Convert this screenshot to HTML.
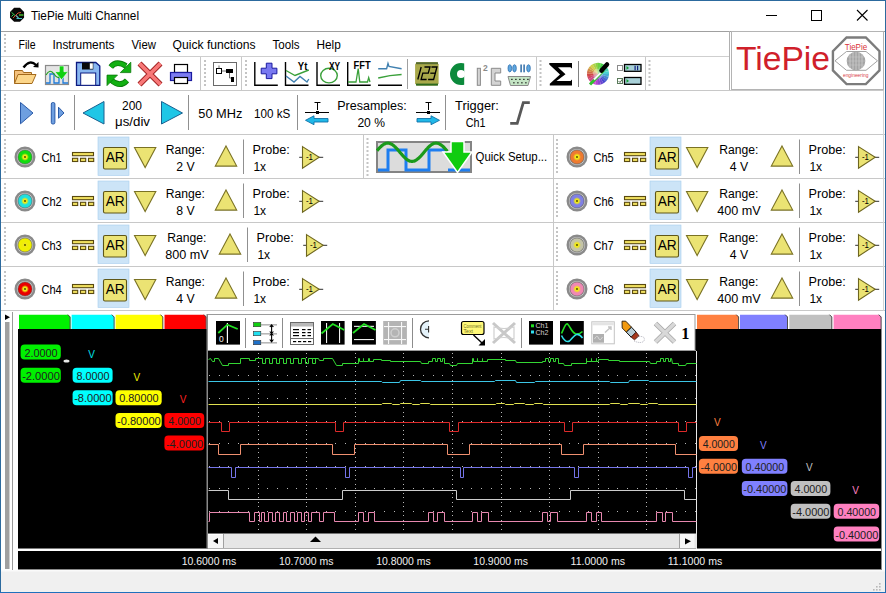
<!DOCTYPE html>
<html><head><meta charset="utf-8"><title>TiePie Multi Channel</title>
<style>html,body{margin:0;padding:0;background:#fff;overflow:hidden}svg{display:block}text{font-family:"Liberation Sans", sans-serif}</style>
</head><body>
<svg width="886" height="593" viewBox="0 0 886 593">
<rect x="0" y="0" width="886" height="593" fill="#ffffff" />
<polygon points="24.07,17.76 19.96,21.87 14.14,21.87 10.03,17.76 10.03,11.94 14.14,7.83 19.96,7.83 24.07,11.94" fill="#080808"/>
<path d="M11.5,12.3 L15,15.5 M11.5,16.5 L13.5,14.5" stroke="#30d050" stroke-width="1" fill="none"/>
<path d="M13,18 L18,13 L21,12.5" stroke="#d05030" stroke-width="1" fill="none"/>
<path d="M16,15.5 L18.5,18" stroke="#70b0c0" stroke-width="1.2" fill="none"/>
<path d="M19,15 H23.5" stroke="#50d030" stroke-width="1.3" fill="none"/>
<path d="M16.5,18.5 H22" stroke="#40c0c8" stroke-width="1" fill="none"/>
<text x="31" y="19.5" font-size="12" fill="#000" text-anchor="start" textLength="108" lengthAdjust="spacingAndGlyphs" >TiePie Multi Channel</text>
<rect x="766" y="15" width="11" height="1" fill="#000"/>
<rect x="811.5" y="10.5" width="10" height="10" fill="none" stroke="#000" stroke-width="1"/>
<path d="M857,10 L867.5,20.5 M867.5,10 L857,20.5" stroke="#000" stroke-width="1.1" fill="none"/>
<rect x="1" y="31" width="884" height="1" fill="#a0a0a0"/>
<rect x="4" y="34" width="2" height="2" fill="#c4c4c4" />
<rect x="4" y="38" width="2" height="2" fill="#c4c4c4" />
<rect x="4" y="42" width="2" height="2" fill="#c4c4c4" />
<rect x="4" y="46" width="2" height="2" fill="#c4c4c4" />
<rect x="4" y="50" width="2" height="2" fill="#c4c4c4" />
<text x="18.5" y="49" font-size="12" fill="#000" text-anchor="start" textLength="17" lengthAdjust="spacingAndGlyphs" >File</text>
<text x="52.5" y="49" font-size="12" fill="#000" text-anchor="start" textLength="62" lengthAdjust="spacingAndGlyphs" >Instruments</text>
<text x="131.5" y="49" font-size="12" fill="#000" text-anchor="start" textLength="24.4" lengthAdjust="spacingAndGlyphs" >View</text>
<text x="172.5" y="49" font-size="12" fill="#000" text-anchor="start" textLength="83" lengthAdjust="spacingAndGlyphs" >Quick functions</text>
<text x="272.5" y="49" font-size="12" fill="#000" text-anchor="start" textLength="27" lengthAdjust="spacingAndGlyphs" >Tools</text>
<text x="316.5" y="49" font-size="12" fill="#000" text-anchor="start" textLength="24.3" lengthAdjust="spacingAndGlyphs" >Help</text>
<rect x="1" y="56" width="729" height="1" fill="#cfcfcf"/>
<rect x="729" y="31" width="1" height="60" fill="#b0b0b0"/>
<rect x="731.5" y="31.5" width="152" height="58" fill="#fff" stroke="#b4b4b4" stroke-width="1"/>
<text x="736" y="69.5" font-size="34" fill="#d0202a" text-anchor="start" textLength="94" lengthAdjust="spacingAndGlyphs" >TiePie</text>
<polygon points="879.48,70.44 865.84,84.08 846.56,84.08 832.92,70.44 832.92,51.16 846.56,37.52 865.84,37.52 879.48,51.16" fill="#fff" stroke="#7c7c7c" stroke-width="2.4"/>
<path d="M835,60.8 L846.5,51.5 L866,51.5 L877.5,60.8 L866,70.3 L846.5,70.3 Z" fill="none" stroke="#8a8a8a" stroke-width="0.8"/>
<circle cx="856" cy="61" r="9.3" fill="#a4a4a4"/>
<path d="M850,54 V68 M853,52.5 V69.5 M856,52 V70 M859,52.5 V69.5 M862,54 V68" stroke="#d8d8d8" stroke-width="0.7"/>
<path d="M848,57 H864 M847,61 H865 M848,65 H864" stroke="#c8c8c8" stroke-width="0.5"/>
<text x="856" y="49.5" font-size="8.5" fill="#d83038" text-anchor="middle" textLength="22.4" lengthAdjust="spacingAndGlyphs" >TiePie</text>
<text x="855.7" y="77.3" font-size="6" fill="#d84048" text-anchor="middle" textLength="25.5" lengthAdjust="spacingAndGlyphs" >engineering</text>
<rect x="1" y="90" width="883" height="1" fill="#c8c8c8"/>
<rect x="4" y="60" width="2" height="2" fill="#c4c4c4" />
<rect x="4" y="64" width="2" height="2" fill="#c4c4c4" />
<rect x="4" y="68" width="2" height="2" fill="#c4c4c4" />
<rect x="4" y="72" width="2" height="2" fill="#c4c4c4" />
<rect x="4" y="76" width="2" height="2" fill="#c4c4c4" />
<rect x="4" y="80" width="2" height="2" fill="#c4c4c4" />
<rect x="4" y="84" width="2" height="2" fill="#c4c4c4" />
<path d="M23.5,67.5 Q30,59 36,65" stroke="#000" stroke-width="2.4" fill="none"/>
<polygon points="38.5,62 38.5,67.5 33,67" fill="#000"/>
<path d="M14.5,83.5 L14.5,70.5 L22.5,70.5 L23.5,72.5 L31.5,72.5 L31.5,75" fill="#f4c27e" stroke="#a46a1c" stroke-width="1"/>
<polygon points="18,74.5 36,74.5 32,83.5 14.5,83.5" fill="#fcd68a" stroke="#a46a1c" stroke-width="1"/>
<rect x="45.5" y="65.5" width="23" height="19" fill="#e4e4e4" stroke="#8a8a8a" stroke-width="1.2"/>
<path d="M46,83 H50 V74 H54 V83 H59 V74 H63 V83 H68" stroke="#1e7ad8" stroke-width="1.3" fill="none"/>
<path d="M46,75 Q50,68 54,74 T62,76 T68,72" stroke="#22a022" stroke-width="1.2" fill="none"/>
<polygon points="59.3,66 63.9,66 63.9,71.7 68,71.7 61.6,79.7 54.8,71.7 59.3,71.7" fill="#10d010" stroke="#fff" stroke-width="0.6"/>
<path d="M76.5,62.5 H95.8 L99.8,66 V85.3 H76.5 Z" fill="#88b6f0" stroke="#0c1a80" stroke-width="1.3"/>
<rect x="82" y="62.5" width="11.3" height="7" fill="#080808"/>
<rect x="89.8" y="63.3" width="3" height="5.5" fill="#fff"/>
<rect x="80.7" y="73" width="15" height="12.3" fill="#fff" stroke="#0c1a80" stroke-width="1"/>
<path d="M110.8,67 Q116,60 126,66" stroke="#0c7a0c" stroke-width="5.6" fill="none"/>
<path d="M110.8,67 Q116,60 126,66" stroke="#12b012" stroke-width="3.8" fill="none"/>
<polygon points="130.8,62.2 130.8,72.6 120.3,72.6" fill="#12b012" stroke="#0c7a0c" stroke-width="0.8"/>
<path d="M127,80.5 Q120,88 111,80" stroke="#0c7a0c" stroke-width="5.6" fill="none"/>
<path d="M127,80.5 Q120,88 111,80" stroke="#12b012" stroke-width="3.8" fill="none"/>
<polygon points="107,75.1 107,85.6 117.5,75.1" fill="#12b012" stroke="#0c7a0c" stroke-width="0.8"/>
<path d="M139.5,63.5 L160.5,84.5 M160.5,63.5 L139.5,84.5" stroke="#a02020" stroke-width="5.6" fill="none"/>
<path d="M139.5,63.5 L160.5,84.5 M160.5,63.5 L139.5,84.5" stroke="#f87878" stroke-width="3.8" fill="none"/>
<rect x="174.5" y="64.5" width="13" height="8" fill="#fff" stroke="#000" stroke-width="1.2"/>
<rect x="170.5" y="72.5" width="21" height="8" fill="#7c7cf0" stroke="#1a1aa0" stroke-width="1.2"/>
<rect x="174.5" y="77.5" width="13" height="6" fill="#fff" stroke="#000" stroke-width="1.2"/>
<rect x="200" y="57" width="1" height="33" fill="#c8c8c8"/>
<rect x="204" y="60" width="2" height="2" fill="#c4c4c4" />
<rect x="204" y="64" width="2" height="2" fill="#c4c4c4" />
<rect x="204" y="68" width="2" height="2" fill="#c4c4c4" />
<rect x="204" y="72" width="2" height="2" fill="#c4c4c4" />
<rect x="204" y="76" width="2" height="2" fill="#c4c4c4" />
<rect x="204" y="80" width="2" height="2" fill="#c4c4c4" />
<rect x="204" y="84" width="2" height="2" fill="#c4c4c4" />
<rect x="213.5" y="62.5" width="23" height="23" fill="#fff" stroke="#6a6a6a" stroke-width="1"/>
<rect x="216.5" y="68.5" width="5" height="5" fill="#fff" stroke="#000" stroke-width="1"/>
<path d="M219,65.5 V68.5 M221.5,71 H226 M229.5,73 V78 H231" stroke="#444" stroke-width="0.8" fill="none"/>
<rect x="226" y="69" width="7" height="4" fill="#000" />
<rect x="231" y="77" width="3" height="5" fill="#000" />
<rect x="241" y="57" width="1" height="33" fill="#c8c8c8"/>
<rect x="245" y="60" width="2" height="2" fill="#c4c4c4" />
<rect x="245" y="64" width="2" height="2" fill="#c4c4c4" />
<rect x="245" y="68" width="2" height="2" fill="#c4c4c4" />
<rect x="245" y="72" width="2" height="2" fill="#c4c4c4" />
<rect x="245" y="76" width="2" height="2" fill="#c4c4c4" />
<rect x="245" y="80" width="2" height="2" fill="#c4c4c4" />
<rect x="245" y="84" width="2" height="2" fill="#c4c4c4" />
<path d="M254.8,62 V85.3 H277.8" stroke="#000" stroke-width="1.4" fill="none"/>
<path d="M266.3,63.2 H272 V68.2 H276.9 V73.8 H272 V78.6 H266.3 V73.8 H261.2 V68.2 H266.3 Z" fill="#7878f0" stroke="#1a1aa0" stroke-width="1"/>
<path d="M285.5,62 V85.3 H308.5" stroke="#000" stroke-width="1.4" fill="none"/>
<path d="M286,70.5 L295,75.5 L308.8,70" stroke="#3aa03a" stroke-width="1.4" fill="none"/>
<path d="M286,76 L294,82 L300,76.5 L307,82 L308.8,79" stroke="#4080b0" stroke-width="1.4" fill="none"/>
<text x="297.8" y="69.5" font-size="10" fill="#000" text-anchor="start" textLength="9.5" lengthAdjust="spacingAndGlyphs" font-weight="bold">Yt</text>
<path d="M317.0,62 V85.3 H340.0" stroke="#000" stroke-width="1.4" fill="none"/>
<ellipse cx="329" cy="75.6" rx="8.3" ry="7.3" fill="none" stroke="#3aa03a" stroke-width="1.4"/>
<text x="328.9" y="69.6" font-size="10" fill="#000" text-anchor="start" textLength="11.2" lengthAdjust="spacingAndGlyphs" font-weight="bold">XY</text>
<path d="M347.7,62 V85.3 H370.7" stroke="#000" stroke-width="1.4" fill="none"/>
<path d="M348,82 H356 L358.2,68.5 L359.8,82 H367.5 L368.7,77.6 L370,82" stroke="#3aa03a" stroke-width="1.3" fill="none"/>
<text x="353.6" y="69" font-size="10" fill="#000" text-anchor="start" textLength="17" lengthAdjust="spacingAndGlyphs" font-weight="bold">FFT</text>
<path d="M378.2,68.8 H386.6 L388,63.5 L389,66.5 L401.6,68.8" stroke="#4080b0" stroke-width="1.4" fill="none"/>
<path d="M378.2,78 Q390,75 401.6,74.5" stroke="#3aa03a" stroke-width="1.4" fill="none"/>
<rect x="378" y="84.5" width="24" height="1.5" fill="#000"/>
<rect x="407" y="59" width="1" height="30" fill="#a0a0a0"/>
<path d="M417,62.2 H436.6 L438.6,64.2 V83.6 L436.6,85.6 H417 L415.1,83.6 V64.2 Z" fill="#a9a94a"/>
<rect x="416" y="62.2" width="22" height="2" fill="#556a30" />
<rect x="416" y="83.6" width="22" height="2" fill="#2e6a1e" />
<path d="M421.17,67.00 L417.80,79.50" stroke="#000" stroke-width="1.3" fill="none"/>
<path d="M424.47,67.00 L429.97,67.00 L428.30,73.20 L422.80,73.20 L421.10,79.50 L426.60,79.50" stroke="#000" stroke-width="1.3" fill="none"/>
<path d="M431.47,67.00 L436.97,67.00 L433.60,79.50 L428.10,79.50" stroke="#000" stroke-width="1.3" fill="none"/>
<path d="M430.30,73.20 L435.30,73.20" stroke="#000" stroke-width="1.3" fill="none"/>
<defs><clipPath id="cclip"><rect x="440" y="60" width="24.2" height="30"/></clipPath></defs>
<ellipse cx="461" cy="74" rx="7.5" ry="7.6" fill="none" stroke="#0c8a3c" stroke-width="7" clip-path="url(#cclip)"/>
<rect x="477.3" y="68.3" width="3.1" height="17" fill="#d4d4d4" stroke="#8a8a8a" stroke-width="1"/>
<text x="483" y="71.3" font-size="8.5" fill="#8a8a8a" text-anchor="start" font-weight="bold">2</text>
<path d="M491.3,68.3 H500.7 V73 H495 V81 H500.7 V85.3 H491.3 Z" fill="#d4d4d4" stroke="#8a8a8a" stroke-width="1"/>
<ellipse cx="509.8" cy="68.3" rx="1.8" ry="3.6" fill="#60a8e0" stroke="#2e70b0" stroke-width="0.8"/>
<ellipse cx="514.5" cy="68.3" rx="1.8" ry="3.6" fill="#60a8e0" stroke="#2e70b0" stroke-width="0.8"/>
<rect x="520.4" y="64.5" width="1.4" height="7.8" fill="#2060a0"/>
<rect x="523.4" y="64.5" width="1.4" height="7.8" fill="#2060a0"/>
<ellipse cx="528.5" cy="68.3" rx="1.8" ry="3.6" fill="#60a8e0" stroke="#2e70b0" stroke-width="0.8"/>
<polygon points="508,76.5 530.5,76.5 528,85.5 510.5,85.5" fill="#c4e4c4" stroke="#8a8a8a" stroke-width="1"/>
<rect x="511.3" y="78.8" width="1.2" height="1.2" fill="#000" />
<rect x="515.3" y="78.8" width="1.2" height="1.2" fill="#000" />
<rect x="519.3" y="78.8" width="1.2" height="1.2" fill="#000" />
<rect x="523.3" y="78.8" width="1.2" height="1.2" fill="#000" />
<rect x="527.3" y="78.8" width="1.2" height="1.2" fill="#000" />
<rect x="513.3" y="82.2" width="1.2" height="1.2" fill="#000" />
<rect x="517.3" y="82.2" width="1.2" height="1.2" fill="#000" />
<rect x="521.3" y="82.2" width="1.2" height="1.2" fill="#000" />
<rect x="525.3" y="82.2" width="1.2" height="1.2" fill="#000" />
<rect x="536" y="57" width="1" height="33" fill="#c8c8c8"/>
<rect x="539.5" y="60" width="2" height="2" fill="#c4c4c4" />
<rect x="539.5" y="64" width="2" height="2" fill="#c4c4c4" />
<rect x="539.5" y="68" width="2" height="2" fill="#c4c4c4" />
<rect x="539.5" y="72" width="2" height="2" fill="#c4c4c4" />
<rect x="539.5" y="76" width="2" height="2" fill="#c4c4c4" />
<rect x="539.5" y="80" width="2" height="2" fill="#c4c4c4" />
<rect x="539.5" y="84" width="2" height="2" fill="#c4c4c4" />
<path d="M549.3,62.9 H572 V68.5 L570.5,67.2 H558 L565.5,74.2 L556.5,81 H570.5 L572,79.5 V85.6 H549.8 V83.8 L560,74.4 L549.3,64.5 Z" fill="#000"/>
<rect x="578" y="61" width="1" height="26" fill="#808080"/>
<path d="M598,73.8 L598.00,62.80 A11,11 0 0 1 600.94,63.20 Z" fill="#69d147"/>
<path d="M598,73.8 L600.85,63.17 A11,11 0 0 1 603.58,64.32 Z" fill="#47d147"/>
<path d="M598,73.8 L603.50,64.27 A11,11 0 0 1 605.85,66.09 Z" fill="#47d169"/>
<path d="M598,73.8 L605.78,66.02 A11,11 0 0 1 607.57,68.38 Z" fill="#47d18c"/>
<path d="M598,73.8 L607.53,68.30 A11,11 0 0 1 608.65,71.05 Z" fill="#47d1ae"/>
<path d="M598,73.8 L608.63,70.95 A11,11 0 0 1 609.00,73.90 Z" fill="#47d1d1"/>
<path d="M598,73.8 L609.00,73.80 A11,11 0 0 1 608.60,76.74 Z" fill="#47aed1"/>
<path d="M598,73.8 L608.63,76.65 A11,11 0 0 1 607.48,79.38 Z" fill="#478cd1"/>
<path d="M598,73.8 L607.53,79.30 A11,11 0 0 1 605.71,81.65 Z" fill="#4769d1"/>
<path d="M598,73.8 L605.78,81.58 A11,11 0 0 1 603.42,83.37 Z" fill="#4747d1"/>
<path d="M598,73.8 L603.50,83.33 A11,11 0 0 1 600.75,84.45 Z" fill="#6947d1"/>
<path d="M598,73.8 L600.85,84.43 A11,11 0 0 1 597.90,84.80 Z" fill="#8c47d1"/>
<path d="M598,73.8 L598.00,84.80 A11,11 0 0 1 595.06,84.40 Z" fill="#ae47d1"/>
<path d="M598,73.8 L595.15,84.43 A11,11 0 0 1 592.42,83.28 Z" fill="#d147d1"/>
<path d="M598,73.8 L592.50,83.33 A11,11 0 0 1 590.15,81.51 Z" fill="#d147ae"/>
<path d="M598,73.8 L590.22,81.58 A11,11 0 0 1 588.43,79.22 Z" fill="#d1478c"/>
<path d="M598,73.8 L588.47,79.30 A11,11 0 0 1 587.35,76.55 Z" fill="#d14769"/>
<path d="M598,73.8 L587.37,76.65 A11,11 0 0 1 587.00,73.70 Z" fill="#d14747"/>
<path d="M598,73.8 L587.00,73.80 A11,11 0 0 1 587.40,70.86 Z" fill="#d16947"/>
<path d="M598,73.8 L587.37,70.95 A11,11 0 0 1 588.52,68.22 Z" fill="#d18c47"/>
<path d="M598,73.8 L588.47,68.30 A11,11 0 0 1 590.29,65.95 Z" fill="#d1ae47"/>
<path d="M598,73.8 L590.22,66.02 A11,11 0 0 1 592.58,64.23 Z" fill="#d1d147"/>
<path d="M598,73.8 L592.50,64.27 A11,11 0 0 1 595.25,63.15 Z" fill="#aed147"/>
<path d="M598,73.8 L595.15,63.17 A11,11 0 0 1 598.10,62.80 Z" fill="#8cd147"/>
<circle cx="598" cy="73.8" r="5" fill="#fff" opacity="0.35"/>
<path d="M590,84.5 L603.5,70.5" stroke="#30c030" stroke-width="3"/>
<path d="M594,79.5 L601,72.5" stroke="#f8f8f8" stroke-width="2"/>
<path d="M601.5,70.5 L607,64.5" stroke="#000" stroke-width="4.5" stroke-linecap="round"/>
<rect x="617.5" y="65.5" width="5" height="5" fill="#fff" stroke="#8a8a8a" stroke-width="1"/>
<rect x="617.5" y="78.5" width="5" height="5" fill="#fff" stroke="#5a7a5a" stroke-width="1"/>
<path d="M618.5,81 L620,82.5 L622.5,79" stroke="#4a6a4a" stroke-width="1" fill="none"/>
<rect x="624.5" y="64.5" width="16.5" height="6.8" fill="#a8d0d8" stroke="#000" stroke-width="1.3"/>
<polygon points="626.5,66.0 629,67.9 626.5,69.8" fill="#10a030"/>
<rect x="624.5" y="77.5" width="16.5" height="6.8" fill="#a8d0d8" stroke="#000" stroke-width="1.3"/>
<polygon points="626.5,79.0 629,80.9 626.5,82.8" fill="#10a030"/>
<rect x="634.5" y="65.8" width="1.2" height="4.5" fill="#102080" />
<rect x="637" y="65.8" width="1.2" height="4.5" fill="#102080" />
<rect x="645" y="57" width="1" height="33" fill="#c8c8c8"/>
<rect x="648.5" y="60" width="2" height="2" fill="#c4c4c4" />
<rect x="648.5" y="64" width="2" height="2" fill="#c4c4c4" />
<rect x="648.5" y="68" width="2" height="2" fill="#c4c4c4" />
<rect x="648.5" y="72" width="2" height="2" fill="#c4c4c4" />
<rect x="648.5" y="76" width="2" height="2" fill="#c4c4c4" />
<rect x="648.5" y="80" width="2" height="2" fill="#c4c4c4" />
<rect x="648.5" y="84" width="2" height="2" fill="#c4c4c4" />
<rect x="1" y="134" width="884" height="1" fill="#c8c8c8"/>
<rect x="4" y="94" width="2" height="2" fill="#c4c4c4" />
<rect x="4" y="98" width="2" height="2" fill="#c4c4c4" />
<rect x="4" y="102" width="2" height="2" fill="#c4c4c4" />
<rect x="4" y="106" width="2" height="2" fill="#c4c4c4" />
<rect x="4" y="110" width="2" height="2" fill="#c4c4c4" />
<rect x="4" y="114" width="2" height="2" fill="#c4c4c4" />
<rect x="4" y="118" width="2" height="2" fill="#c4c4c4" />
<rect x="4" y="122" width="2" height="2" fill="#c4c4c4" />
<rect x="4" y="126" width="2" height="2" fill="#c4c4c4" />
<rect x="4" y="130" width="2" height="2" fill="#c4c4c4" />
<polygon points="20.5,102.5 33,113 20.5,123.8" fill="#6e9fe0" stroke="#2a5aa8" stroke-width="1"/>
<rect x="51.3" y="102.5" width="3.6" height="21.5" rx="1.5" fill="#6e9fe0" stroke="#2a5aa8" stroke-width="1"/>
<polygon points="58.5,107.2 64,113 58.5,118.2" fill="#6e9fe0" stroke="#2a5aa8" stroke-width="1"/>
<rect x="74" y="95" width="1" height="35" fill="#909090"/>
<polygon points="104,101.5 104,124 83,113" fill="#1fc6e6" stroke="#1a6090" stroke-width="1"/>
<text x="132" y="110" font-size="12" fill="#000" text-anchor="middle" textLength="20" lengthAdjust="spacingAndGlyphs" >200</text>
<text x="132.5" y="126" font-size="12" fill="#000" text-anchor="middle" textLength="35" lengthAdjust="spacingAndGlyphs" >μs/div</text>
<polygon points="161.5,101.5 161.5,124 182.5,113" fill="#1fc6e6" stroke="#1a6090" stroke-width="1"/>
<rect x="188" y="95" width="1" height="35" fill="#909090"/>
<text x="198.3" y="118" font-size="12" fill="#000" text-anchor="start" textLength="44" lengthAdjust="spacingAndGlyphs" >50 MHz</text>
<text x="254" y="118" font-size="12" fill="#000" text-anchor="start" textLength="36.3" lengthAdjust="spacingAndGlyphs" >100 kS</text>
<rect x="297" y="95" width="1" height="35" fill="#909090"/>
<path d="M314.5,102.5 H320.5 M317.5,102.5 V110" stroke="#000" stroke-width="1" fill="none"/>
<rect x="305" y="112" width="24" height="1" fill="#000"/>
<rect x="316" y="111" width="3" height="3" fill="#000" />
<polygon points="328,118.5 314,118.5 314,115.8 305.5,120.3 314,124.7 314,122 328,122" fill="#20b8e8" stroke="#1070a8" stroke-width="0.9"/>
<text x="372" y="110" font-size="12" fill="#000" text-anchor="middle" textLength="69.5" lengthAdjust="spacingAndGlyphs" >Presamples:</text>
<text x="371.2" y="126.5" font-size="12" fill="#000" text-anchor="middle" textLength="27.6" lengthAdjust="spacingAndGlyphs" >20 %</text>
<path d="M425.5,102.5 H431.5 M428.5,102.5 V110" stroke="#000" stroke-width="1" fill="none"/>
<rect x="416" y="112" width="24" height="1" fill="#000"/>
<rect x="427" y="111" width="3" height="3" fill="#000" />
<polygon points="417,118.5 431,118.5 431,115.8 439.5,120.3 431,124.7 431,122 417,122" fill="#20b8e8" stroke="#1070a8" stroke-width="0.9"/>
<rect x="445" y="95" width="1" height="35" fill="#909090"/>
<text x="477" y="110" font-size="12" fill="#000" text-anchor="middle" textLength="43.8" lengthAdjust="spacingAndGlyphs" >Trigger:</text>
<text x="475.7" y="126.5" font-size="12" fill="#000" text-anchor="middle" textLength="19.8" lengthAdjust="spacingAndGlyphs" >Ch1</text>
<path d="M510.2,123.3 H517.2 L523.3,102.6 H529.8" stroke="#585858" stroke-width="2.8" fill="none" stroke-linejoin="miter"/>
<rect x="1" y="178" width="884" height="1" fill="#c8c8c8"/>
<rect x="1" y="222" width="884" height="1" fill="#c8c8c8"/>
<rect x="1" y="266" width="884" height="1" fill="#c8c8c8"/>
<rect x="1" y="310" width="884" height="1" fill="#c8c8c8"/>
<rect x="4" y="139" width="2" height="2" fill="#c4c4c4" />
<rect x="4" y="143" width="2" height="2" fill="#c4c4c4" />
<rect x="4" y="147" width="2" height="2" fill="#c4c4c4" />
<rect x="4" y="151" width="2" height="2" fill="#c4c4c4" />
<rect x="4" y="155" width="2" height="2" fill="#c4c4c4" />
<rect x="4" y="159" width="2" height="2" fill="#c4c4c4" />
<rect x="4" y="163" width="2" height="2" fill="#c4c4c4" />
<rect x="4" y="167" width="2" height="2" fill="#c4c4c4" />
<rect x="4" y="171" width="2" height="2" fill="#c4c4c4" />
<defs><radialGradient id="ledg1" cx="0.5" cy="0.5" r="0.5"><stop offset="0" stop-color="#f4ec10"/><stop offset="0.28" stop-color="#f0e818"/><stop offset="0.55" stop-color="#10dc10"/><stop offset="1" stop-color="#10dc10"/></radialGradient></defs>
<circle cx="25" cy="157" r="9.3" fill="#d4d4d4" stroke="#8a8a8a" stroke-width="2.4"/>
<circle cx="25" cy="157" r="7.1" fill="url(#ledg1)" stroke="#505050" stroke-width="1" stroke-opacity="0.6"/>
<circle cx="25" cy="157" r="0.9" fill="#404000"/>
<text x="41.4" y="161.6" font-size="12" fill="#000" text-anchor="start" textLength="20.3" lengthAdjust="spacingAndGlyphs" >Ch1</text>
<rect x="72.5" y="152.5" width="21" height="3.2" fill="#f0e060" stroke="#5a4a10" stroke-width="1.1"/>
<rect x="72.5" y="158.3" width="5.2" height="3.2" fill="#f0e060" stroke="#5a4a10" stroke-width="1.1"/>
<rect x="80.5" y="158.3" width="5.2" height="3.2" fill="#f0e060" stroke="#5a4a10" stroke-width="1.1"/>
<rect x="88.5" y="158.3" width="5.2" height="3.2" fill="#f0e060" stroke="#5a4a10" stroke-width="1.1"/>
<rect x="98" y="137" width="31" height="38.5" fill="#cce4f7" stroke="#a6cdee" stroke-width="0.6"/>
<rect x="103.5" y="147.5" width="23" height="21.5" rx="1.5" fill="#ece476" stroke="#5e5618" stroke-width="1.1"/>
<text x="115.2" y="161.9" font-size="14" fill="#000" text-anchor="middle" textLength="19" lengthAdjust="spacingAndGlyphs" >AR</text>
<polygon points="134.5,147.5 155.8,147.5 145.15,167.5" fill="#ebe373" stroke="#7a7224" stroke-width="1.1"/>
<text x="185.4" y="153.7" font-size="12" fill="#000" text-anchor="middle" textLength="39.2" lengthAdjust="spacingAndGlyphs" >Range:</text>
<text x="185.4" y="170.8" font-size="12" fill="#000" text-anchor="middle" textLength="18.4" lengthAdjust="spacingAndGlyphs" >2 V</text>
<polygon points="226.0,146.0 236.7,166.1 215.3,166.1" fill="#ebe373" stroke="#7a7224" stroke-width="1.1"/>
<rect x="243" y="139.5" width="1" height="34.5" fill="#909090"/>
<text x="252.6" y="153.7" font-size="12" fill="#000" text-anchor="start" textLength="37.2" lengthAdjust="spacingAndGlyphs" >Probe:</text>
<text x="253.4" y="170.8" font-size="12" fill="#000" text-anchor="start" >1x</text>
<rect x="299.2" y="156.8" width="24.0" height="1" fill="#303030"/>
<polygon points="302.5,146.60000000000002 319.2,157.3 302.5,168.20000000000002" fill="#ebe373" stroke="#6e6620" stroke-width="1.1"/>
<text x="309.4" y="160.3" font-size="8.5" fill="#000" text-anchor="middle" textLength="7" lengthAdjust="spacingAndGlyphs" >-1</text>
<rect x="4" y="183" width="2" height="2" fill="#c4c4c4" />
<rect x="4" y="187" width="2" height="2" fill="#c4c4c4" />
<rect x="4" y="191" width="2" height="2" fill="#c4c4c4" />
<rect x="4" y="195" width="2" height="2" fill="#c4c4c4" />
<rect x="4" y="199" width="2" height="2" fill="#c4c4c4" />
<rect x="4" y="203" width="2" height="2" fill="#c4c4c4" />
<rect x="4" y="207" width="2" height="2" fill="#c4c4c4" />
<rect x="4" y="211" width="2" height="2" fill="#c4c4c4" />
<rect x="4" y="215" width="2" height="2" fill="#c4c4c4" />
<defs><radialGradient id="ledg2" cx="0.5" cy="0.5" r="0.5"><stop offset="0" stop-color="#f4ec10"/><stop offset="0.28" stop-color="#f0e818"/><stop offset="0.55" stop-color="#20e0e0"/><stop offset="1" stop-color="#20e0e0"/></radialGradient></defs>
<circle cx="25" cy="201" r="9.3" fill="#d4d4d4" stroke="#8a8a8a" stroke-width="2.4"/>
<circle cx="25" cy="201" r="7.1" fill="url(#ledg2)" stroke="#505050" stroke-width="1" stroke-opacity="0.6"/>
<circle cx="25" cy="201" r="0.9" fill="#404000"/>
<text x="41.4" y="205.6" font-size="12" fill="#000" text-anchor="start" textLength="20.3" lengthAdjust="spacingAndGlyphs" >Ch2</text>
<rect x="72.5" y="196.5" width="21" height="3.2" fill="#f0e060" stroke="#5a4a10" stroke-width="1.1"/>
<rect x="72.5" y="202.3" width="5.2" height="3.2" fill="#f0e060" stroke="#5a4a10" stroke-width="1.1"/>
<rect x="80.5" y="202.3" width="5.2" height="3.2" fill="#f0e060" stroke="#5a4a10" stroke-width="1.1"/>
<rect x="88.5" y="202.3" width="5.2" height="3.2" fill="#f0e060" stroke="#5a4a10" stroke-width="1.1"/>
<rect x="98" y="181" width="31" height="38.5" fill="#cce4f7" stroke="#a6cdee" stroke-width="0.6"/>
<rect x="103.5" y="191.5" width="23" height="21.5" rx="1.5" fill="#ece476" stroke="#5e5618" stroke-width="1.1"/>
<text x="115.2" y="205.9" font-size="14" fill="#000" text-anchor="middle" textLength="19" lengthAdjust="spacingAndGlyphs" >AR</text>
<polygon points="134.5,191.5 155.8,191.5 145.15,211.5" fill="#ebe373" stroke="#7a7224" stroke-width="1.1"/>
<text x="185.4" y="197.7" font-size="12" fill="#000" text-anchor="middle" textLength="39.2" lengthAdjust="spacingAndGlyphs" >Range:</text>
<text x="185.4" y="214.8" font-size="12" fill="#000" text-anchor="middle" textLength="18.4" lengthAdjust="spacingAndGlyphs" >8 V</text>
<polygon points="226.0,190.0 236.7,210.1 215.3,210.1" fill="#ebe373" stroke="#7a7224" stroke-width="1.1"/>
<rect x="243" y="183.5" width="1" height="34.5" fill="#909090"/>
<text x="252.6" y="197.7" font-size="12" fill="#000" text-anchor="start" textLength="37.2" lengthAdjust="spacingAndGlyphs" >Probe:</text>
<text x="253.4" y="214.8" font-size="12" fill="#000" text-anchor="start" >1x</text>
<rect x="299.2" y="200.8" width="24.0" height="1" fill="#303030"/>
<polygon points="302.5,190.60000000000002 319.2,201.3 302.5,212.20000000000002" fill="#ebe373" stroke="#6e6620" stroke-width="1.1"/>
<text x="309.4" y="204.3" font-size="8.5" fill="#000" text-anchor="middle" textLength="7" lengthAdjust="spacingAndGlyphs" >-1</text>
<rect x="4" y="227" width="2" height="2" fill="#c4c4c4" />
<rect x="4" y="231" width="2" height="2" fill="#c4c4c4" />
<rect x="4" y="235" width="2" height="2" fill="#c4c4c4" />
<rect x="4" y="239" width="2" height="2" fill="#c4c4c4" />
<rect x="4" y="243" width="2" height="2" fill="#c4c4c4" />
<rect x="4" y="247" width="2" height="2" fill="#c4c4c4" />
<rect x="4" y="251" width="2" height="2" fill="#c4c4c4" />
<rect x="4" y="255" width="2" height="2" fill="#c4c4c4" />
<rect x="4" y="259" width="2" height="2" fill="#c4c4c4" />
<defs><radialGradient id="ledg3" cx="0.5" cy="0.5" r="0.5"><stop offset="0" stop-color="#f4ec10"/><stop offset="0.28" stop-color="#f0e818"/><stop offset="0.55" stop-color="#f0f000"/><stop offset="1" stop-color="#f0f000"/></radialGradient></defs>
<circle cx="25" cy="245" r="9.3" fill="#d4d4d4" stroke="#8a8a8a" stroke-width="2.4"/>
<circle cx="25" cy="245" r="7.1" fill="url(#ledg3)" stroke="#505050" stroke-width="1" stroke-opacity="0.6"/>
<circle cx="25" cy="245" r="0.9" fill="#404000"/>
<text x="41.4" y="249.6" font-size="12" fill="#000" text-anchor="start" textLength="20.3" lengthAdjust="spacingAndGlyphs" >Ch3</text>
<rect x="72.5" y="240.5" width="21" height="3.2" fill="#f0e060" stroke="#5a4a10" stroke-width="1.1"/>
<rect x="72.5" y="246.3" width="5.2" height="3.2" fill="#f0e060" stroke="#5a4a10" stroke-width="1.1"/>
<rect x="80.5" y="246.3" width="5.2" height="3.2" fill="#f0e060" stroke="#5a4a10" stroke-width="1.1"/>
<rect x="88.5" y="246.3" width="5.2" height="3.2" fill="#f0e060" stroke="#5a4a10" stroke-width="1.1"/>
<rect x="98" y="225" width="31" height="38.5" fill="#cce4f7" stroke="#a6cdee" stroke-width="0.6"/>
<rect x="103.5" y="235.5" width="23" height="21.5" rx="1.5" fill="#ece476" stroke="#5e5618" stroke-width="1.1"/>
<text x="115.2" y="249.9" font-size="14" fill="#000" text-anchor="middle" textLength="19" lengthAdjust="spacingAndGlyphs" >AR</text>
<polygon points="134.5,235.5 155.8,235.5 145.15,255.5" fill="#ebe373" stroke="#7a7224" stroke-width="1.1"/>
<text x="186.9" y="241.7" font-size="12" fill="#000" text-anchor="middle" textLength="39.2" lengthAdjust="spacingAndGlyphs" >Range:</text>
<text x="186.9" y="258.8" font-size="12" fill="#000" text-anchor="middle" textLength="43.5" lengthAdjust="spacingAndGlyphs" >800 mV</text>
<polygon points="230.0,234.0 240.7,254.1 219.3,254.1" fill="#ebe373" stroke="#7a7224" stroke-width="1.1"/>
<rect x="247" y="227.5" width="1" height="34.5" fill="#909090"/>
<text x="256.6" y="241.7" font-size="12" fill="#000" text-anchor="start" textLength="37.2" lengthAdjust="spacingAndGlyphs" >Probe:</text>
<text x="257.4" y="258.8" font-size="12" fill="#000" text-anchor="start" >1x</text>
<rect x="303.2" y="244.8" width="24.0" height="1" fill="#303030"/>
<polygon points="306.5,234.60000000000002 323.2,245.3 306.5,256.2" fill="#ebe373" stroke="#6e6620" stroke-width="1.1"/>
<text x="313.4" y="248.3" font-size="8.5" fill="#000" text-anchor="middle" textLength="7" lengthAdjust="spacingAndGlyphs" >-1</text>
<rect x="4" y="271" width="2" height="2" fill="#c4c4c4" />
<rect x="4" y="275" width="2" height="2" fill="#c4c4c4" />
<rect x="4" y="279" width="2" height="2" fill="#c4c4c4" />
<rect x="4" y="283" width="2" height="2" fill="#c4c4c4" />
<rect x="4" y="287" width="2" height="2" fill="#c4c4c4" />
<rect x="4" y="291" width="2" height="2" fill="#c4c4c4" />
<rect x="4" y="295" width="2" height="2" fill="#c4c4c4" />
<rect x="4" y="299" width="2" height="2" fill="#c4c4c4" />
<rect x="4" y="303" width="2" height="2" fill="#c4c4c4" />
<defs><radialGradient id="ledg4" cx="0.5" cy="0.5" r="0.5"><stop offset="0" stop-color="#f4ec10"/><stop offset="0.28" stop-color="#f0e818"/><stop offset="0.55" stop-color="#e80000"/><stop offset="1" stop-color="#e80000"/></radialGradient></defs>
<circle cx="25" cy="289" r="9.3" fill="#d4d4d4" stroke="#8a8a8a" stroke-width="2.4"/>
<circle cx="25" cy="289" r="7.1" fill="url(#ledg4)" stroke="#505050" stroke-width="1" stroke-opacity="0.6"/>
<circle cx="25" cy="289" r="0.9" fill="#404000"/>
<text x="41.4" y="293.6" font-size="12" fill="#000" text-anchor="start" textLength="20.3" lengthAdjust="spacingAndGlyphs" >Ch4</text>
<rect x="72.5" y="284.5" width="21" height="3.2" fill="#f0e060" stroke="#5a4a10" stroke-width="1.1"/>
<rect x="72.5" y="290.3" width="5.2" height="3.2" fill="#f0e060" stroke="#5a4a10" stroke-width="1.1"/>
<rect x="80.5" y="290.3" width="5.2" height="3.2" fill="#f0e060" stroke="#5a4a10" stroke-width="1.1"/>
<rect x="88.5" y="290.3" width="5.2" height="3.2" fill="#f0e060" stroke="#5a4a10" stroke-width="1.1"/>
<rect x="98" y="269" width="31" height="38.5" fill="#cce4f7" stroke="#a6cdee" stroke-width="0.6"/>
<rect x="103.5" y="279.5" width="23" height="21.5" rx="1.5" fill="#ece476" stroke="#5e5618" stroke-width="1.1"/>
<text x="115.2" y="293.9" font-size="14" fill="#000" text-anchor="middle" textLength="19" lengthAdjust="spacingAndGlyphs" >AR</text>
<polygon points="134.5,279.5 155.8,279.5 145.15,299.5" fill="#ebe373" stroke="#7a7224" stroke-width="1.1"/>
<text x="185.4" y="285.7" font-size="12" fill="#000" text-anchor="middle" textLength="39.2" lengthAdjust="spacingAndGlyphs" >Range:</text>
<text x="185.4" y="302.8" font-size="12" fill="#000" text-anchor="middle" textLength="18.4" lengthAdjust="spacingAndGlyphs" >4 V</text>
<polygon points="226.0,278.0 236.7,298.1 215.3,298.1" fill="#ebe373" stroke="#7a7224" stroke-width="1.1"/>
<rect x="243" y="271.5" width="1" height="34.5" fill="#909090"/>
<text x="252.6" y="285.7" font-size="12" fill="#000" text-anchor="start" textLength="37.2" lengthAdjust="spacingAndGlyphs" >Probe:</text>
<text x="253.4" y="302.8" font-size="12" fill="#000" text-anchor="start" >1x</text>
<rect x="299.2" y="288.8" width="24.0" height="1" fill="#303030"/>
<polygon points="302.5,278.6 319.2,289.3 302.5,300.2" fill="#ebe373" stroke="#6e6620" stroke-width="1.1"/>
<text x="309.4" y="292.3" font-size="8.5" fill="#000" text-anchor="middle" textLength="7" lengthAdjust="spacingAndGlyphs" >-1</text>
<rect x="556" y="139" width="2" height="2" fill="#c4c4c4" />
<rect x="556" y="143" width="2" height="2" fill="#c4c4c4" />
<rect x="556" y="147" width="2" height="2" fill="#c4c4c4" />
<rect x="556" y="151" width="2" height="2" fill="#c4c4c4" />
<rect x="556" y="155" width="2" height="2" fill="#c4c4c4" />
<rect x="556" y="159" width="2" height="2" fill="#c4c4c4" />
<rect x="556" y="163" width="2" height="2" fill="#c4c4c4" />
<rect x="556" y="167" width="2" height="2" fill="#c4c4c4" />
<rect x="556" y="171" width="2" height="2" fill="#c4c4c4" />
<defs><radialGradient id="ledg5" cx="0.5" cy="0.5" r="0.5"><stop offset="0" stop-color="#f4ec10"/><stop offset="0.28" stop-color="#f0e818"/><stop offset="0.55" stop-color="#ee7a30"/><stop offset="1" stop-color="#ee7a30"/></radialGradient></defs>
<circle cx="577" cy="157" r="9.3" fill="#d4d4d4" stroke="#8a8a8a" stroke-width="2.4"/>
<circle cx="577" cy="157" r="7.1" fill="url(#ledg5)" stroke="#505050" stroke-width="1" stroke-opacity="0.6"/>
<circle cx="577" cy="157" r="0.9" fill="#404000"/>
<text x="593.4" y="161.6" font-size="12" fill="#000" text-anchor="start" textLength="20.3" lengthAdjust="spacingAndGlyphs" >Ch5</text>
<rect x="624.5" y="152.5" width="21" height="3.2" fill="#f0e060" stroke="#5a4a10" stroke-width="1.1"/>
<rect x="624.5" y="158.3" width="5.2" height="3.2" fill="#f0e060" stroke="#5a4a10" stroke-width="1.1"/>
<rect x="632.5" y="158.3" width="5.2" height="3.2" fill="#f0e060" stroke="#5a4a10" stroke-width="1.1"/>
<rect x="640.5" y="158.3" width="5.2" height="3.2" fill="#f0e060" stroke="#5a4a10" stroke-width="1.1"/>
<rect x="650" y="137" width="31" height="38.5" fill="#cce4f7" stroke="#a6cdee" stroke-width="0.6"/>
<rect x="655.5" y="147.5" width="23" height="21.5" rx="1.5" fill="#ece476" stroke="#5e5618" stroke-width="1.1"/>
<text x="667.2" y="161.9" font-size="14" fill="#000" text-anchor="middle" textLength="19" lengthAdjust="spacingAndGlyphs" >AR</text>
<polygon points="686.5,147.5 707.8,147.5 697.15,167.5" fill="#ebe373" stroke="#7a7224" stroke-width="1.1"/>
<text x="738.9" y="153.7" font-size="12" fill="#000" text-anchor="middle" textLength="39.2" lengthAdjust="spacingAndGlyphs" >Range:</text>
<text x="738.9" y="170.8" font-size="12" fill="#000" text-anchor="middle" textLength="18.4" lengthAdjust="spacingAndGlyphs" >4 V</text>
<polygon points="782.0,146.0 792.7,166.1 771.3,166.1" fill="#ebe373" stroke="#7a7224" stroke-width="1.1"/>
<rect x="799" y="139.5" width="1" height="34.5" fill="#909090"/>
<text x="808.6" y="153.7" font-size="12" fill="#000" text-anchor="start" textLength="37.2" lengthAdjust="spacingAndGlyphs" >Probe:</text>
<text x="809.4" y="170.8" font-size="12" fill="#000" text-anchor="start" >1x</text>
<rect x="855.2" y="156.8" width="24.0" height="1" fill="#303030"/>
<polygon points="858.5,146.60000000000002 875.2,157.3 858.5,168.20000000000002" fill="#ebe373" stroke="#6e6620" stroke-width="1.1"/>
<text x="865.4000000000001" y="160.3" font-size="8.5" fill="#000" text-anchor="middle" textLength="7" lengthAdjust="spacingAndGlyphs" >-1</text>
<rect x="556" y="183" width="2" height="2" fill="#c4c4c4" />
<rect x="556" y="187" width="2" height="2" fill="#c4c4c4" />
<rect x="556" y="191" width="2" height="2" fill="#c4c4c4" />
<rect x="556" y="195" width="2" height="2" fill="#c4c4c4" />
<rect x="556" y="199" width="2" height="2" fill="#c4c4c4" />
<rect x="556" y="203" width="2" height="2" fill="#c4c4c4" />
<rect x="556" y="207" width="2" height="2" fill="#c4c4c4" />
<rect x="556" y="211" width="2" height="2" fill="#c4c4c4" />
<rect x="556" y="215" width="2" height="2" fill="#c4c4c4" />
<defs><radialGradient id="ledg6" cx="0.5" cy="0.5" r="0.5"><stop offset="0" stop-color="#f4ec10"/><stop offset="0.28" stop-color="#f0e818"/><stop offset="0.55" stop-color="#8080e4"/><stop offset="1" stop-color="#8080e4"/></radialGradient></defs>
<circle cx="577" cy="201" r="9.3" fill="#d4d4d4" stroke="#8a8a8a" stroke-width="2.4"/>
<circle cx="577" cy="201" r="7.1" fill="url(#ledg6)" stroke="#505050" stroke-width="1" stroke-opacity="0.6"/>
<circle cx="577" cy="201" r="0.9" fill="#404000"/>
<text x="593.4" y="205.6" font-size="12" fill="#000" text-anchor="start" textLength="20.3" lengthAdjust="spacingAndGlyphs" >Ch6</text>
<rect x="624.5" y="196.5" width="21" height="3.2" fill="#f0e060" stroke="#5a4a10" stroke-width="1.1"/>
<rect x="624.5" y="202.3" width="5.2" height="3.2" fill="#f0e060" stroke="#5a4a10" stroke-width="1.1"/>
<rect x="632.5" y="202.3" width="5.2" height="3.2" fill="#f0e060" stroke="#5a4a10" stroke-width="1.1"/>
<rect x="640.5" y="202.3" width="5.2" height="3.2" fill="#f0e060" stroke="#5a4a10" stroke-width="1.1"/>
<rect x="650" y="181" width="31" height="38.5" fill="#cce4f7" stroke="#a6cdee" stroke-width="0.6"/>
<rect x="655.5" y="191.5" width="23" height="21.5" rx="1.5" fill="#ece476" stroke="#5e5618" stroke-width="1.1"/>
<text x="667.2" y="205.9" font-size="14" fill="#000" text-anchor="middle" textLength="19" lengthAdjust="spacingAndGlyphs" >AR</text>
<polygon points="686.5,191.5 707.8,191.5 697.15,211.5" fill="#ebe373" stroke="#7a7224" stroke-width="1.1"/>
<text x="738.9" y="197.7" font-size="12" fill="#000" text-anchor="middle" textLength="39.2" lengthAdjust="spacingAndGlyphs" >Range:</text>
<text x="738.9" y="214.8" font-size="12" fill="#000" text-anchor="middle" textLength="43.5" lengthAdjust="spacingAndGlyphs" >400 mV</text>
<polygon points="782.0,190.0 792.7,210.1 771.3,210.1" fill="#ebe373" stroke="#7a7224" stroke-width="1.1"/>
<rect x="799" y="183.5" width="1" height="34.5" fill="#909090"/>
<text x="808.6" y="197.7" font-size="12" fill="#000" text-anchor="start" textLength="37.2" lengthAdjust="spacingAndGlyphs" >Probe:</text>
<text x="809.4" y="214.8" font-size="12" fill="#000" text-anchor="start" >1x</text>
<rect x="855.2" y="200.8" width="24.0" height="1" fill="#303030"/>
<polygon points="858.5,190.60000000000002 875.2,201.3 858.5,212.20000000000002" fill="#ebe373" stroke="#6e6620" stroke-width="1.1"/>
<text x="865.4000000000001" y="204.3" font-size="8.5" fill="#000" text-anchor="middle" textLength="7" lengthAdjust="spacingAndGlyphs" >-1</text>
<rect x="556" y="227" width="2" height="2" fill="#c4c4c4" />
<rect x="556" y="231" width="2" height="2" fill="#c4c4c4" />
<rect x="556" y="235" width="2" height="2" fill="#c4c4c4" />
<rect x="556" y="239" width="2" height="2" fill="#c4c4c4" />
<rect x="556" y="243" width="2" height="2" fill="#c4c4c4" />
<rect x="556" y="247" width="2" height="2" fill="#c4c4c4" />
<rect x="556" y="251" width="2" height="2" fill="#c4c4c4" />
<rect x="556" y="255" width="2" height="2" fill="#c4c4c4" />
<rect x="556" y="259" width="2" height="2" fill="#c4c4c4" />
<defs><radialGradient id="ledg7" cx="0.5" cy="0.5" r="0.5"><stop offset="0" stop-color="#f4ec10"/><stop offset="0.28" stop-color="#f0e818"/><stop offset="0.55" stop-color="#c4c4a8"/><stop offset="1" stop-color="#c4c4a8"/></radialGradient></defs>
<circle cx="577" cy="245" r="9.3" fill="#d4d4d4" stroke="#8a8a8a" stroke-width="2.4"/>
<circle cx="577" cy="245" r="7.1" fill="url(#ledg7)" stroke="#505050" stroke-width="1" stroke-opacity="0.6"/>
<circle cx="577" cy="245" r="0.9" fill="#404000"/>
<text x="593.4" y="249.6" font-size="12" fill="#000" text-anchor="start" textLength="20.3" lengthAdjust="spacingAndGlyphs" >Ch7</text>
<rect x="624.5" y="240.5" width="21" height="3.2" fill="#f0e060" stroke="#5a4a10" stroke-width="1.1"/>
<rect x="624.5" y="246.3" width="5.2" height="3.2" fill="#f0e060" stroke="#5a4a10" stroke-width="1.1"/>
<rect x="632.5" y="246.3" width="5.2" height="3.2" fill="#f0e060" stroke="#5a4a10" stroke-width="1.1"/>
<rect x="640.5" y="246.3" width="5.2" height="3.2" fill="#f0e060" stroke="#5a4a10" stroke-width="1.1"/>
<rect x="650" y="225" width="31" height="38.5" fill="#cce4f7" stroke="#a6cdee" stroke-width="0.6"/>
<rect x="655.5" y="235.5" width="23" height="21.5" rx="1.5" fill="#ece476" stroke="#5e5618" stroke-width="1.1"/>
<text x="667.2" y="249.9" font-size="14" fill="#000" text-anchor="middle" textLength="19" lengthAdjust="spacingAndGlyphs" >AR</text>
<polygon points="686.5,235.5 707.8,235.5 697.15,255.5" fill="#ebe373" stroke="#7a7224" stroke-width="1.1"/>
<text x="738.9" y="241.7" font-size="12" fill="#000" text-anchor="middle" textLength="39.2" lengthAdjust="spacingAndGlyphs" >Range:</text>
<text x="738.9" y="258.8" font-size="12" fill="#000" text-anchor="middle" textLength="18.4" lengthAdjust="spacingAndGlyphs" >4 V</text>
<polygon points="782.0,234.0 792.7,254.1 771.3,254.1" fill="#ebe373" stroke="#7a7224" stroke-width="1.1"/>
<rect x="799" y="227.5" width="1" height="34.5" fill="#909090"/>
<text x="808.6" y="241.7" font-size="12" fill="#000" text-anchor="start" textLength="37.2" lengthAdjust="spacingAndGlyphs" >Probe:</text>
<text x="809.4" y="258.8" font-size="12" fill="#000" text-anchor="start" >1x</text>
<rect x="855.2" y="244.8" width="24.0" height="1" fill="#303030"/>
<polygon points="858.5,234.60000000000002 875.2,245.3 858.5,256.2" fill="#ebe373" stroke="#6e6620" stroke-width="1.1"/>
<text x="865.4000000000001" y="248.3" font-size="8.5" fill="#000" text-anchor="middle" textLength="7" lengthAdjust="spacingAndGlyphs" >-1</text>
<rect x="556" y="271" width="2" height="2" fill="#c4c4c4" />
<rect x="556" y="275" width="2" height="2" fill="#c4c4c4" />
<rect x="556" y="279" width="2" height="2" fill="#c4c4c4" />
<rect x="556" y="283" width="2" height="2" fill="#c4c4c4" />
<rect x="556" y="287" width="2" height="2" fill="#c4c4c4" />
<rect x="556" y="291" width="2" height="2" fill="#c4c4c4" />
<rect x="556" y="295" width="2" height="2" fill="#c4c4c4" />
<rect x="556" y="299" width="2" height="2" fill="#c4c4c4" />
<rect x="556" y="303" width="2" height="2" fill="#c4c4c4" />
<defs><radialGradient id="ledg8" cx="0.5" cy="0.5" r="0.5"><stop offset="0" stop-color="#f4ec10"/><stop offset="0.28" stop-color="#f0e818"/><stop offset="0.55" stop-color="#f088b4"/><stop offset="1" stop-color="#f088b4"/></radialGradient></defs>
<circle cx="577" cy="289" r="9.3" fill="#d4d4d4" stroke="#8a8a8a" stroke-width="2.4"/>
<circle cx="577" cy="289" r="7.1" fill="url(#ledg8)" stroke="#505050" stroke-width="1" stroke-opacity="0.6"/>
<circle cx="577" cy="289" r="0.9" fill="#404000"/>
<text x="593.4" y="293.6" font-size="12" fill="#000" text-anchor="start" textLength="20.3" lengthAdjust="spacingAndGlyphs" >Ch8</text>
<rect x="624.5" y="284.5" width="21" height="3.2" fill="#f0e060" stroke="#5a4a10" stroke-width="1.1"/>
<rect x="624.5" y="290.3" width="5.2" height="3.2" fill="#f0e060" stroke="#5a4a10" stroke-width="1.1"/>
<rect x="632.5" y="290.3" width="5.2" height="3.2" fill="#f0e060" stroke="#5a4a10" stroke-width="1.1"/>
<rect x="640.5" y="290.3" width="5.2" height="3.2" fill="#f0e060" stroke="#5a4a10" stroke-width="1.1"/>
<rect x="650" y="269" width="31" height="38.5" fill="#cce4f7" stroke="#a6cdee" stroke-width="0.6"/>
<rect x="655.5" y="279.5" width="23" height="21.5" rx="1.5" fill="#ece476" stroke="#5e5618" stroke-width="1.1"/>
<text x="667.2" y="293.9" font-size="14" fill="#000" text-anchor="middle" textLength="19" lengthAdjust="spacingAndGlyphs" >AR</text>
<polygon points="686.5,279.5 707.8,279.5 697.15,299.5" fill="#ebe373" stroke="#7a7224" stroke-width="1.1"/>
<text x="738.9" y="285.7" font-size="12" fill="#000" text-anchor="middle" textLength="39.2" lengthAdjust="spacingAndGlyphs" >Range:</text>
<text x="738.9" y="302.8" font-size="12" fill="#000" text-anchor="middle" textLength="43.5" lengthAdjust="spacingAndGlyphs" >400 mV</text>
<polygon points="782.0,278.0 792.7,298.1 771.3,298.1" fill="#ebe373" stroke="#7a7224" stroke-width="1.1"/>
<rect x="799" y="271.5" width="1" height="34.5" fill="#909090"/>
<text x="808.6" y="285.7" font-size="12" fill="#000" text-anchor="start" textLength="37.2" lengthAdjust="spacingAndGlyphs" >Probe:</text>
<text x="809.4" y="302.8" font-size="12" fill="#000" text-anchor="start" >1x</text>
<rect x="855.2" y="288.8" width="24.0" height="1" fill="#303030"/>
<polygon points="858.5,278.6 875.2,289.3 858.5,300.2" fill="#ebe373" stroke="#6e6620" stroke-width="1.1"/>
<text x="865.4000000000001" y="292.3" font-size="8.5" fill="#000" text-anchor="middle" textLength="7" lengthAdjust="spacingAndGlyphs" >-1</text>
<rect x="363" y="135" width="1" height="43" fill="#c8c8c8"/>
<rect x="366.5" y="138" width="2" height="2" fill="#c4c4c4" />
<rect x="366.5" y="142" width="2" height="2" fill="#c4c4c4" />
<rect x="366.5" y="146" width="2" height="2" fill="#c4c4c4" />
<rect x="366.5" y="150" width="2" height="2" fill="#c4c4c4" />
<rect x="366.5" y="154" width="2" height="2" fill="#c4c4c4" />
<rect x="366.5" y="158" width="2" height="2" fill="#c4c4c4" />
<rect x="366.5" y="162" width="2" height="2" fill="#c4c4c4" />
<rect x="366.5" y="166" width="2" height="2" fill="#c4c4c4" />
<rect x="366.5" y="170" width="2" height="2" fill="#c4c4c4" />
<rect x="366.5" y="174" width="2" height="2" fill="#c4c4c4" />
<rect x="553" y="135" width="1" height="175" fill="#c8c8c8"/>
<rect x="883" y="91" width="1" height="220" fill="#d4d4d4"/>
<rect x="377" y="142" width="94" height="30" fill="#dcdcdc" stroke="#848484" stroke-width="2"/>
<path d="M378,170 H388 V150 H406 V170 H429 V150 H445" stroke="#1e7ef0" stroke-width="3" fill="none"/>
<path d="M448,170 H470" stroke="#1e7ef0" stroke-width="3" fill="none"/>
<path d="M377.0,150.7 L377.5,150.2 L378.0,149.6 L378.5,149.0 L379.0,148.5 L379.5,147.9 L380.0,147.4 L380.5,146.9 L381.0,146.5 L381.5,146.0 L382.0,145.6 L382.5,145.2 L383.0,144.8 L383.5,144.5 L384.0,144.2 L384.5,143.9 L385.0,143.7 L385.5,143.5 L386.0,143.3 L386.5,143.2 L387.0,143.1 L387.5,143.1 L388.0,143.1 L388.5,143.1 L389.0,143.2 L389.5,143.3 L390.0,143.5 L390.5,143.7 L391.0,143.9 L391.5,144.1 L392.0,144.4 L392.5,144.8 L393.0,145.1 L393.5,145.5 L394.0,145.9 L394.5,146.4 L395.0,146.8 L395.5,147.3 L396.0,147.8 L396.5,148.4 L397.0,148.9 L397.5,149.5 L398.0,150.0 L398.5,150.6 L399.0,151.2 L399.5,151.8 L400.0,152.4 L400.5,153.0 L401.0,153.6 L401.5,154.2 L402.0,154.7 L402.5,155.3 L403.0,155.9 L403.5,156.4 L404.0,156.9 L404.5,157.4 L405.0,157.9 L405.5,158.4 L406.0,158.8 L406.5,159.2 L407.0,159.6 L407.5,159.9 L408.0,160.2 L408.5,160.5 L409.0,160.7 L409.5,160.9 L410.0,161.1 L410.5,161.2 L411.0,161.3 L411.5,161.4 L412.0,161.4 L412.5,161.4 L413.0,161.3 L413.5,161.2 L414.0,161.1 L414.5,160.9 L415.0,160.7 L415.5,160.4 L416.0,160.2 L416.5,159.8 L417.0,159.5 L417.5,159.1 L418.0,158.7 L418.5,158.3 L419.0,157.8 L419.5,157.3 L420.0,156.8 L420.5,156.3 L421.0,155.8 L421.5,155.2 L422.0,154.6 L422.5,154.1 L423.0,153.5 L423.5,152.9 L424.0,152.3 L424.5,151.7 L425.0,151.1 L425.5,150.5 L426.0,149.9 L426.5,149.4 L427.0,148.8 L427.5,148.3 L428.0,147.7 L428.5,147.2 L429.0,146.7 L429.5,146.3 L430.0,145.8 L430.5,145.4 L431.0,145.0 L431.5,144.7 L432.0,144.4 L432.5,144.1 L433.0,143.8 L433.5,143.6 L434.0,143.4 L434.5,143.3 L435.0,143.2 L435.5,143.1 L436.0,143.1 L436.5,143.1 L437.0,143.2 L437.5,143.3 L438.0,143.4 L438.5,143.5 L439.0,143.7 L439.5,144.0 L440.0,144.3 L440.5,144.6 L441.0,144.9 L441.5,145.3 L442.0,145.7 L442.5,146.1 L443.0,146.5 L443.5,147.0 L444.0,147.5 L444.5,148.0 L445.0,148.6 L445.5,149.1 L446.0,149.7 L446.5,150.3 L447.0,150.9 L447.5,151.4" stroke="#1a9a1a" stroke-width="3.2" fill="none"/>
<polygon points="451,141.5 464,141.5 464,152 472,152 457.5,172.5 443,152 451,152" fill="#10cc10" stroke="#fff" stroke-width="1.5"/>
<text x="475.6" y="161.3" font-size="12" fill="#000" text-anchor="start" textLength="71.6" lengthAdjust="spacingAndGlyphs" >Quick Setup...</text>
<polygon points="5,314.5 10,317.3 5,320" fill="#000"/>
<rect x="5" y="322" width="4.5" height="247" fill="#a0a0a0" />
<rect x="12" y="312" width="1" height="259" fill="#9a9a9a"/>
<rect x="18" y="314" width="864" height="235" fill="#000" />
<rect x="18" y="551" width="864" height="19" fill="#000" />
<rect x="18" y="548" width="864" height="1" fill="#7a7a7a"/>
<rect x="18" y="569" width="864" height="1" fill="#8a8a8a"/>
<rect x="18" y="549" width="864" height="2" fill="#ffffff" />
<rect x="881" y="314" width="1" height="256" fill="#8a8a8a"/>
<rect x="1" y="570" width="884" height="22" fill="#f0f0f0" />
<rect x="1" y="570" width="884" height="1.5" fill="#fafafa"/>
<rect x="879" y="583" width="1.6" height="1.6" fill="#b8b8b8" />
<rect x="879" y="586" width="1.6" height="1.6" fill="#b8b8b8" />
<rect x="876" y="586" width="1.6" height="1.6" fill="#b8b8b8" />
<rect x="879" y="589" width="1.6" height="1.6" fill="#b8b8b8" />
<rect x="876" y="589" width="1.6" height="1.6" fill="#b8b8b8" />
<rect x="873" y="589" width="1.6" height="1.6" fill="#b8b8b8" />
<rect x="18" y="311" width="864" height="3.7" fill="#ffffff" />
<rect x="18" y="314" width="864" height="15" fill="#ffffff" />
<path d="M19,329 V314.7 H68.3 L70.3,316.7 V329 Z" fill="#00f000"/>
<path d="M67.8,314.7 L70.1,317 V329" stroke="#505050" stroke-width="1" fill="none"/>
<path d="M71.6,329 V314.7 H112.3 L114.3,316.7 V329 Z" fill="#00ffff"/>
<path d="M111.8,314.7 L114.1,317 V329" stroke="#505050" stroke-width="1" fill="none"/>
<path d="M115.6,329 V314.7 H161.0 L163.0,316.7 V329 Z" fill="#ffff00"/>
<path d="M160.5,314.7 L162.8,317 V329" stroke="#505050" stroke-width="1" fill="none"/>
<path d="M164.5,329 V314.7 H204.4 L206.4,316.7 V329 Z" fill="#ff0000"/>
<path d="M203.9,314.7 L206.20000000000002,317 V329" stroke="#505050" stroke-width="1" fill="none"/>
<path d="M697,329 V314.7 H736.8 L738.8,316.7 V329 Z" fill="#ff8040"/>
<path d="M736.3,314.7 L738.5999999999999,317 V329" stroke="#505050" stroke-width="1" fill="none"/>
<path d="M740,329 V314.7 H785.7 L787.7,316.7 V329 Z" fill="#8080ff"/>
<path d="M785.2,314.7 L787.5,317 V329" stroke="#505050" stroke-width="1" fill="none"/>
<path d="M789.3,329 V314.7 H830.0 L832.0,316.7 V329 Z" fill="#c0c0c0"/>
<path d="M829.5,314.7 L831.8,317 V329" stroke="#505050" stroke-width="1" fill="none"/>
<path d="M833.6,329 V314.7 H879.3 L881.3,316.7 V329 Z" fill="#ff80c0"/>
<path d="M878.8,314.7 L881.0999999999999,317 V329" stroke="#505050" stroke-width="1" fill="none"/>
<rect x="20.6" y="344.5" width="40.2" height="15" rx="4" fill="#00f000"/>
<text x="41.0" y="356.5" font-size="11.5" fill="#202020" text-anchor="middle" textLength="33.2" lengthAdjust="spacingAndGlyphs" >2.0000</text>
<rect x="20.6" y="367.7" width="40.2" height="15" rx="4" fill="#00f000"/>
<text x="41.0" y="379.7" font-size="11.5" fill="#202020" text-anchor="middle" textLength="37.7" lengthAdjust="spacingAndGlyphs" >-2.0000</text>
<rect x="72.6" y="367.7" width="40" height="15" rx="4" fill="#00ffff"/>
<text x="92.89999999999999" y="379.7" font-size="11.5" fill="#202020" text-anchor="middle" textLength="33" lengthAdjust="spacingAndGlyphs" >8.0000</text>
<rect x="72.6" y="390.3" width="40" height="15" rx="4" fill="#00ffff"/>
<text x="92.89999999999999" y="402.3" font-size="11.5" fill="#202020" text-anchor="middle" textLength="37.5" lengthAdjust="spacingAndGlyphs" >-8.0000</text>
<rect x="115.5" y="390.3" width="46.2" height="15" rx="4" fill="#ffff00"/>
<text x="138.9" y="402.3" font-size="11.5" fill="#202020" text-anchor="middle" textLength="39.2" lengthAdjust="spacingAndGlyphs" >0.80000</text>
<rect x="115.5" y="412.9" width="46.2" height="15" rx="4" fill="#ffff00"/>
<text x="138.9" y="424.9" font-size="11.5" fill="#202020" text-anchor="middle" textLength="43.7" lengthAdjust="spacingAndGlyphs" >-0.80000</text>
<rect x="164.4" y="412.9" width="39.8" height="15" rx="4" fill="#ff0000"/>
<text x="184.60000000000002" y="424.9" font-size="11.5" fill="#202020" text-anchor="middle" textLength="32.8" lengthAdjust="spacingAndGlyphs" >4.0000</text>
<rect x="164.4" y="435.5" width="39.8" height="15" rx="4" fill="#ff0000"/>
<text x="184.60000000000002" y="447.5" font-size="11.5" fill="#202020" text-anchor="middle" textLength="37.3" lengthAdjust="spacingAndGlyphs" >-4.0000</text>
<text x="91.7" y="357.7" font-size="10" fill="#00e0e8" text-anchor="middle" >V</text>
<text x="136.9" y="380.9" font-size="10" fill="#f0f000" text-anchor="middle" >V</text>
<text x="183.2" y="402.8" font-size="10" fill="#ff2020" text-anchor="middle" >V</text>
<ellipse cx="66.5" cy="361" rx="3" ry="1.6" fill="#e8e8e8"/>
<rect x="698.9" y="435.9" width="39.1" height="15" rx="4" fill="#ff8040"/>
<text x="718.7499999999999" y="447.9" font-size="11.5" fill="#202020" text-anchor="middle" textLength="32.1" lengthAdjust="spacingAndGlyphs" >4.0000</text>
<rect x="698.9" y="458.7" width="39.1" height="15" rx="4" fill="#ff8040"/>
<text x="718.7499999999999" y="470.7" font-size="11.5" fill="#202020" text-anchor="middle" textLength="36.6" lengthAdjust="spacingAndGlyphs" >-4.0000</text>
<rect x="741.8" y="458.7" width="45.6" height="15" rx="4" fill="#8080ff"/>
<text x="764.8999999999999" y="470.7" font-size="11.5" fill="#202020" text-anchor="middle" textLength="38.6" lengthAdjust="spacingAndGlyphs" >0.40000</text>
<rect x="741.8" y="481" width="45.6" height="15" rx="4" fill="#8080ff"/>
<text x="764.8999999999999" y="493" font-size="11.5" fill="#202020" text-anchor="middle" textLength="43.1" lengthAdjust="spacingAndGlyphs" >-0.40000</text>
<rect x="790.7" y="481" width="39.7" height="15" rx="4" fill="#c0c0c0"/>
<text x="810.85" y="493" font-size="11.5" fill="#202020" text-anchor="middle" textLength="32.7" lengthAdjust="spacingAndGlyphs" >4.0000</text>
<rect x="790.7" y="503.7" width="39.7" height="15" rx="4" fill="#c0c0c0"/>
<text x="810.85" y="515.7" font-size="11.5" fill="#202020" text-anchor="middle" textLength="37.2" lengthAdjust="spacingAndGlyphs" >-4.0000</text>
<rect x="833.7" y="503.7" width="45.5" height="15" rx="4" fill="#ff80c0"/>
<text x="856.75" y="515.7" font-size="11.5" fill="#202020" text-anchor="middle" textLength="38.5" lengthAdjust="spacingAndGlyphs" >0.40000</text>
<rect x="833.7" y="526.5" width="45.5" height="15" rx="4" fill="#ff80c0"/>
<text x="856.75" y="538.5" font-size="11.5" fill="#202020" text-anchor="middle" textLength="43.0" lengthAdjust="spacingAndGlyphs" >-0.40000</text>
<text x="717.3" y="426.2" font-size="10" fill="#ff8040" text-anchor="middle" >V</text>
<text x="763.3" y="449" font-size="10" fill="#8080ff" text-anchor="middle" >V</text>
<text x="809.4" y="471" font-size="10" fill="#c0c0c0" text-anchor="middle" >V</text>
<text x="855.7" y="494" font-size="10" fill="#ff80c0" text-anchor="middle" >V</text>
<text x="209.0" y="565" font-size="11" fill="#f0f0f0" text-anchor="middle" textLength="54.5" lengthAdjust="spacingAndGlyphs" >10.6000 ms</text>
<text x="306.2" y="565" font-size="11" fill="#f0f0f0" text-anchor="middle" textLength="54.5" lengthAdjust="spacingAndGlyphs" >10.7000 ms</text>
<text x="403.4" y="565" font-size="11" fill="#f0f0f0" text-anchor="middle" textLength="54.5" lengthAdjust="spacingAndGlyphs" >10.8000 ms</text>
<text x="500.6" y="565" font-size="11" fill="#f0f0f0" text-anchor="middle" textLength="54.5" lengthAdjust="spacingAndGlyphs" >10.9000 ms</text>
<text x="597.8" y="565" font-size="11" fill="#f0f0f0" text-anchor="middle" textLength="54.5" lengthAdjust="spacingAndGlyphs" >11.0000 ms</text>
<text x="695.0" y="565" font-size="11" fill="#f0f0f0" text-anchor="middle" textLength="54.5" lengthAdjust="spacingAndGlyphs" >11.1000 ms</text>
<rect x="206.5" y="314" width="1.5" height="235" fill="#8a8a8a"/>
<rect x="208" y="314" width="487" height="37" fill="#ffffff" />
<rect x="208" y="314" width="487" height="1" fill="#9a9a9a"/>
<rect x="208" y="350" width="488" height="1" fill="#9a9a9a"/>
<rect x="694.5" y="314" width="1" height="36" fill="#9a9a9a"/>
<rect x="208" y="351" width="488" height="183" fill="#000" />
<rect x="696" y="351" width="1" height="198" fill="#e8e8e8"/>
<path d="M258,353h1v1h-1zM258,357h1v1h-1zM258,362h1v1h-1zM258,366h1v1h-1zM258,371h1v1h-1zM258,375h1v1h-1zM258,380h1v1h-1zM258,384h1v1h-1zM258,389h1v1h-1zM258,393h1v1h-1zM258,398h1v1h-1zM258,402h1v1h-1zM258,407h1v1h-1zM258,412h1v1h-1zM258,416h1v1h-1zM258,421h1v1h-1zM258,425h1v1h-1zM258,430h1v1h-1zM258,434h1v1h-1zM258,439h1v1h-1zM258,443h1v1h-1zM258,448h1v1h-1zM258,452h1v1h-1zM258,457h1v1h-1zM258,461h1v1h-1zM258,466h1v1h-1zM258,470h1v1h-1zM258,475h1v1h-1zM258,479h1v1h-1zM258,484h1v1h-1zM258,488h1v1h-1zM258,493h1v1h-1zM258,497h1v1h-1zM258,502h1v1h-1zM258,506h1v1h-1zM258,511h1v1h-1zM258,515h1v1h-1zM258,520h1v1h-1zM258,524h1v1h-1zM258,529h1v1h-1zM306,353h1v1h-1zM306,357h1v1h-1zM306,362h1v1h-1zM306,366h1v1h-1zM306,371h1v1h-1zM306,375h1v1h-1zM306,380h1v1h-1zM306,384h1v1h-1zM306,389h1v1h-1zM306,393h1v1h-1zM306,398h1v1h-1zM306,402h1v1h-1zM306,407h1v1h-1zM306,412h1v1h-1zM306,416h1v1h-1zM306,421h1v1h-1zM306,425h1v1h-1zM306,430h1v1h-1zM306,434h1v1h-1zM306,439h1v1h-1zM306,443h1v1h-1zM306,448h1v1h-1zM306,452h1v1h-1zM306,457h1v1h-1zM306,461h1v1h-1zM306,466h1v1h-1zM306,470h1v1h-1zM306,475h1v1h-1zM306,479h1v1h-1zM306,484h1v1h-1zM306,488h1v1h-1zM306,493h1v1h-1zM306,497h1v1h-1zM306,502h1v1h-1zM306,506h1v1h-1zM306,511h1v1h-1zM306,515h1v1h-1zM306,520h1v1h-1zM306,524h1v1h-1zM306,529h1v1h-1zM355,353h1v1h-1zM355,357h1v1h-1zM355,362h1v1h-1zM355,366h1v1h-1zM355,371h1v1h-1zM355,375h1v1h-1zM355,380h1v1h-1zM355,384h1v1h-1zM355,389h1v1h-1zM355,393h1v1h-1zM355,398h1v1h-1zM355,402h1v1h-1zM355,407h1v1h-1zM355,412h1v1h-1zM355,416h1v1h-1zM355,421h1v1h-1zM355,425h1v1h-1zM355,430h1v1h-1zM355,434h1v1h-1zM355,439h1v1h-1zM355,443h1v1h-1zM355,448h1v1h-1zM355,452h1v1h-1zM355,457h1v1h-1zM355,461h1v1h-1zM355,466h1v1h-1zM355,470h1v1h-1zM355,475h1v1h-1zM355,479h1v1h-1zM355,484h1v1h-1zM355,488h1v1h-1zM355,493h1v1h-1zM355,497h1v1h-1zM355,502h1v1h-1zM355,506h1v1h-1zM355,511h1v1h-1zM355,515h1v1h-1zM355,520h1v1h-1zM355,524h1v1h-1zM355,529h1v1h-1zM403,353h1v1h-1zM403,357h1v1h-1zM403,362h1v1h-1zM403,366h1v1h-1zM403,371h1v1h-1zM403,375h1v1h-1zM403,380h1v1h-1zM403,384h1v1h-1zM403,389h1v1h-1zM403,393h1v1h-1zM403,398h1v1h-1zM403,402h1v1h-1zM403,407h1v1h-1zM403,412h1v1h-1zM403,416h1v1h-1zM403,421h1v1h-1zM403,425h1v1h-1zM403,430h1v1h-1zM403,434h1v1h-1zM403,439h1v1h-1zM403,443h1v1h-1zM403,448h1v1h-1zM403,452h1v1h-1zM403,457h1v1h-1zM403,461h1v1h-1zM403,466h1v1h-1zM403,470h1v1h-1zM403,475h1v1h-1zM403,479h1v1h-1zM403,484h1v1h-1zM403,488h1v1h-1zM403,493h1v1h-1zM403,497h1v1h-1zM403,502h1v1h-1zM403,506h1v1h-1zM403,511h1v1h-1zM403,515h1v1h-1zM403,520h1v1h-1zM403,524h1v1h-1zM403,529h1v1h-1zM452,353h1v1h-1zM452,357h1v1h-1zM452,362h1v1h-1zM452,366h1v1h-1zM452,371h1v1h-1zM452,375h1v1h-1zM452,380h1v1h-1zM452,384h1v1h-1zM452,389h1v1h-1zM452,393h1v1h-1zM452,398h1v1h-1zM452,402h1v1h-1zM452,407h1v1h-1zM452,412h1v1h-1zM452,416h1v1h-1zM452,421h1v1h-1zM452,425h1v1h-1zM452,430h1v1h-1zM452,434h1v1h-1zM452,439h1v1h-1zM452,443h1v1h-1zM452,448h1v1h-1zM452,452h1v1h-1zM452,457h1v1h-1zM452,461h1v1h-1zM452,466h1v1h-1zM452,470h1v1h-1zM452,475h1v1h-1zM452,479h1v1h-1zM452,484h1v1h-1zM452,488h1v1h-1zM452,493h1v1h-1zM452,497h1v1h-1zM452,502h1v1h-1zM452,506h1v1h-1zM452,511h1v1h-1zM452,515h1v1h-1zM452,520h1v1h-1zM452,524h1v1h-1zM452,529h1v1h-1zM501,353h1v1h-1zM501,357h1v1h-1zM501,362h1v1h-1zM501,366h1v1h-1zM501,371h1v1h-1zM501,375h1v1h-1zM501,380h1v1h-1zM501,384h1v1h-1zM501,389h1v1h-1zM501,393h1v1h-1zM501,398h1v1h-1zM501,402h1v1h-1zM501,407h1v1h-1zM501,412h1v1h-1zM501,416h1v1h-1zM501,421h1v1h-1zM501,425h1v1h-1zM501,430h1v1h-1zM501,434h1v1h-1zM501,439h1v1h-1zM501,443h1v1h-1zM501,448h1v1h-1zM501,452h1v1h-1zM501,457h1v1h-1zM501,461h1v1h-1zM501,466h1v1h-1zM501,470h1v1h-1zM501,475h1v1h-1zM501,479h1v1h-1zM501,484h1v1h-1zM501,488h1v1h-1zM501,493h1v1h-1zM501,497h1v1h-1zM501,502h1v1h-1zM501,506h1v1h-1zM501,511h1v1h-1zM501,515h1v1h-1zM501,520h1v1h-1zM501,524h1v1h-1zM501,529h1v1h-1zM549,353h1v1h-1zM549,357h1v1h-1zM549,362h1v1h-1zM549,366h1v1h-1zM549,371h1v1h-1zM549,375h1v1h-1zM549,380h1v1h-1zM549,384h1v1h-1zM549,389h1v1h-1zM549,393h1v1h-1zM549,398h1v1h-1zM549,402h1v1h-1zM549,407h1v1h-1zM549,412h1v1h-1zM549,416h1v1h-1zM549,421h1v1h-1zM549,425h1v1h-1zM549,430h1v1h-1zM549,434h1v1h-1zM549,439h1v1h-1zM549,443h1v1h-1zM549,448h1v1h-1zM549,452h1v1h-1zM549,457h1v1h-1zM549,461h1v1h-1zM549,466h1v1h-1zM549,470h1v1h-1zM549,475h1v1h-1zM549,479h1v1h-1zM549,484h1v1h-1zM549,488h1v1h-1zM549,493h1v1h-1zM549,497h1v1h-1zM549,502h1v1h-1zM549,506h1v1h-1zM549,511h1v1h-1zM549,515h1v1h-1zM549,520h1v1h-1zM549,524h1v1h-1zM549,529h1v1h-1zM598,353h1v1h-1zM598,357h1v1h-1zM598,362h1v1h-1zM598,366h1v1h-1zM598,371h1v1h-1zM598,375h1v1h-1zM598,380h1v1h-1zM598,384h1v1h-1zM598,389h1v1h-1zM598,393h1v1h-1zM598,398h1v1h-1zM598,402h1v1h-1zM598,407h1v1h-1zM598,412h1v1h-1zM598,416h1v1h-1zM598,421h1v1h-1zM598,425h1v1h-1zM598,430h1v1h-1zM598,434h1v1h-1zM598,439h1v1h-1zM598,443h1v1h-1zM598,448h1v1h-1zM598,452h1v1h-1zM598,457h1v1h-1zM598,461h1v1h-1zM598,466h1v1h-1zM598,470h1v1h-1zM598,475h1v1h-1zM598,479h1v1h-1zM598,484h1v1h-1zM598,488h1v1h-1zM598,493h1v1h-1zM598,497h1v1h-1zM598,502h1v1h-1zM598,506h1v1h-1zM598,511h1v1h-1zM598,515h1v1h-1zM598,520h1v1h-1zM598,524h1v1h-1zM598,529h1v1h-1zM646,353h1v1h-1zM646,357h1v1h-1zM646,362h1v1h-1zM646,366h1v1h-1zM646,371h1v1h-1zM646,375h1v1h-1zM646,380h1v1h-1zM646,384h1v1h-1zM646,389h1v1h-1zM646,393h1v1h-1zM646,398h1v1h-1zM646,402h1v1h-1zM646,407h1v1h-1zM646,412h1v1h-1zM646,416h1v1h-1zM646,421h1v1h-1zM646,425h1v1h-1zM646,430h1v1h-1zM646,434h1v1h-1zM646,439h1v1h-1zM646,443h1v1h-1zM646,448h1v1h-1zM646,452h1v1h-1zM646,457h1v1h-1zM646,461h1v1h-1zM646,466h1v1h-1zM646,470h1v1h-1zM646,475h1v1h-1zM646,479h1v1h-1zM646,484h1v1h-1zM646,488h1v1h-1zM646,493h1v1h-1zM646,497h1v1h-1zM646,502h1v1h-1zM646,506h1v1h-1zM646,511h1v1h-1zM646,515h1v1h-1zM646,520h1v1h-1zM646,524h1v1h-1zM646,529h1v1h-1zM209,375h1v1h-1zM219,375h1v1h-1zM228,375h1v1h-1zM238,375h1v1h-1zM248,375h1v1h-1zM258,375h1v1h-1zM267,375h1v1h-1zM277,375h1v1h-1zM287,375h1v1h-1zM296,375h1v1h-1zM306,375h1v1h-1zM316,375h1v1h-1zM326,375h1v1h-1zM335,375h1v1h-1zM345,375h1v1h-1zM355,375h1v1h-1zM365,375h1v1h-1zM374,375h1v1h-1zM384,375h1v1h-1zM394,375h1v1h-1zM403,375h1v1h-1zM413,375h1v1h-1zM423,375h1v1h-1zM433,375h1v1h-1zM442,375h1v1h-1zM452,375h1v1h-1zM462,375h1v1h-1zM471,375h1v1h-1zM481,375h1v1h-1zM491,375h1v1h-1zM501,375h1v1h-1zM510,375h1v1h-1zM520,375h1v1h-1zM530,375h1v1h-1zM539,375h1v1h-1zM549,375h1v1h-1zM559,375h1v1h-1zM569,375h1v1h-1zM578,375h1v1h-1zM588,375h1v1h-1zM598,375h1v1h-1zM608,375h1v1h-1zM617,375h1v1h-1zM627,375h1v1h-1zM637,375h1v1h-1zM646,375h1v1h-1zM656,375h1v1h-1zM666,375h1v1h-1zM676,375h1v1h-1zM685,375h1v1h-1zM695,375h1v1h-1zM209,398h1v1h-1zM219,398h1v1h-1zM228,398h1v1h-1zM238,398h1v1h-1zM248,398h1v1h-1zM258,398h1v1h-1zM267,398h1v1h-1zM277,398h1v1h-1zM287,398h1v1h-1zM296,398h1v1h-1zM306,398h1v1h-1zM316,398h1v1h-1zM326,398h1v1h-1zM335,398h1v1h-1zM345,398h1v1h-1zM355,398h1v1h-1zM365,398h1v1h-1zM374,398h1v1h-1zM384,398h1v1h-1zM394,398h1v1h-1zM403,398h1v1h-1zM413,398h1v1h-1zM423,398h1v1h-1zM433,398h1v1h-1zM442,398h1v1h-1zM452,398h1v1h-1zM462,398h1v1h-1zM471,398h1v1h-1zM481,398h1v1h-1zM491,398h1v1h-1zM501,398h1v1h-1zM510,398h1v1h-1zM520,398h1v1h-1zM530,398h1v1h-1zM539,398h1v1h-1zM549,398h1v1h-1zM559,398h1v1h-1zM569,398h1v1h-1zM578,398h1v1h-1zM588,398h1v1h-1zM598,398h1v1h-1zM608,398h1v1h-1zM617,398h1v1h-1zM627,398h1v1h-1zM637,398h1v1h-1zM646,398h1v1h-1zM656,398h1v1h-1zM666,398h1v1h-1zM676,398h1v1h-1zM685,398h1v1h-1zM695,398h1v1h-1zM209,421h1v1h-1zM219,421h1v1h-1zM228,421h1v1h-1zM238,421h1v1h-1zM248,421h1v1h-1zM258,421h1v1h-1zM267,421h1v1h-1zM277,421h1v1h-1zM287,421h1v1h-1zM296,421h1v1h-1zM306,421h1v1h-1zM316,421h1v1h-1zM326,421h1v1h-1zM335,421h1v1h-1zM345,421h1v1h-1zM355,421h1v1h-1zM365,421h1v1h-1zM374,421h1v1h-1zM384,421h1v1h-1zM394,421h1v1h-1zM403,421h1v1h-1zM413,421h1v1h-1zM423,421h1v1h-1zM433,421h1v1h-1zM442,421h1v1h-1zM452,421h1v1h-1zM462,421h1v1h-1zM471,421h1v1h-1zM481,421h1v1h-1zM491,421h1v1h-1zM501,421h1v1h-1zM510,421h1v1h-1zM520,421h1v1h-1zM530,421h1v1h-1zM539,421h1v1h-1zM549,421h1v1h-1zM559,421h1v1h-1zM569,421h1v1h-1zM578,421h1v1h-1zM588,421h1v1h-1zM598,421h1v1h-1zM608,421h1v1h-1zM617,421h1v1h-1zM627,421h1v1h-1zM637,421h1v1h-1zM646,421h1v1h-1zM656,421h1v1h-1zM666,421h1v1h-1zM676,421h1v1h-1zM685,421h1v1h-1zM695,421h1v1h-1zM209,443h1v1h-1zM219,443h1v1h-1zM228,443h1v1h-1zM238,443h1v1h-1zM248,443h1v1h-1zM258,443h1v1h-1zM267,443h1v1h-1zM277,443h1v1h-1zM287,443h1v1h-1zM296,443h1v1h-1zM306,443h1v1h-1zM316,443h1v1h-1zM326,443h1v1h-1zM335,443h1v1h-1zM345,443h1v1h-1zM355,443h1v1h-1zM365,443h1v1h-1zM374,443h1v1h-1zM384,443h1v1h-1zM394,443h1v1h-1zM403,443h1v1h-1zM413,443h1v1h-1zM423,443h1v1h-1zM433,443h1v1h-1zM442,443h1v1h-1zM452,443h1v1h-1zM462,443h1v1h-1zM471,443h1v1h-1zM481,443h1v1h-1zM491,443h1v1h-1zM501,443h1v1h-1zM510,443h1v1h-1zM520,443h1v1h-1zM530,443h1v1h-1zM539,443h1v1h-1zM549,443h1v1h-1zM559,443h1v1h-1zM569,443h1v1h-1zM578,443h1v1h-1zM588,443h1v1h-1zM598,443h1v1h-1zM608,443h1v1h-1zM617,443h1v1h-1zM627,443h1v1h-1zM637,443h1v1h-1zM646,443h1v1h-1zM656,443h1v1h-1zM666,443h1v1h-1zM676,443h1v1h-1zM685,443h1v1h-1zM695,443h1v1h-1zM209,466h1v1h-1zM219,466h1v1h-1zM228,466h1v1h-1zM238,466h1v1h-1zM248,466h1v1h-1zM258,466h1v1h-1zM267,466h1v1h-1zM277,466h1v1h-1zM287,466h1v1h-1zM296,466h1v1h-1zM306,466h1v1h-1zM316,466h1v1h-1zM326,466h1v1h-1zM335,466h1v1h-1zM345,466h1v1h-1zM355,466h1v1h-1zM365,466h1v1h-1zM374,466h1v1h-1zM384,466h1v1h-1zM394,466h1v1h-1zM403,466h1v1h-1zM413,466h1v1h-1zM423,466h1v1h-1zM433,466h1v1h-1zM442,466h1v1h-1zM452,466h1v1h-1zM462,466h1v1h-1zM471,466h1v1h-1zM481,466h1v1h-1zM491,466h1v1h-1zM501,466h1v1h-1zM510,466h1v1h-1zM520,466h1v1h-1zM530,466h1v1h-1zM539,466h1v1h-1zM549,466h1v1h-1zM559,466h1v1h-1zM569,466h1v1h-1zM578,466h1v1h-1zM588,466h1v1h-1zM598,466h1v1h-1zM608,466h1v1h-1zM617,466h1v1h-1zM627,466h1v1h-1zM637,466h1v1h-1zM646,466h1v1h-1zM656,466h1v1h-1zM666,466h1v1h-1zM676,466h1v1h-1zM685,466h1v1h-1zM695,466h1v1h-1zM209,488h1v1h-1zM219,488h1v1h-1zM228,488h1v1h-1zM238,488h1v1h-1zM248,488h1v1h-1zM258,488h1v1h-1zM267,488h1v1h-1zM277,488h1v1h-1zM287,488h1v1h-1zM296,488h1v1h-1zM306,488h1v1h-1zM316,488h1v1h-1zM326,488h1v1h-1zM335,488h1v1h-1zM345,488h1v1h-1zM355,488h1v1h-1zM365,488h1v1h-1zM374,488h1v1h-1zM384,488h1v1h-1zM394,488h1v1h-1zM403,488h1v1h-1zM413,488h1v1h-1zM423,488h1v1h-1zM433,488h1v1h-1zM442,488h1v1h-1zM452,488h1v1h-1zM462,488h1v1h-1zM471,488h1v1h-1zM481,488h1v1h-1zM491,488h1v1h-1zM501,488h1v1h-1zM510,488h1v1h-1zM520,488h1v1h-1zM530,488h1v1h-1zM539,488h1v1h-1zM549,488h1v1h-1zM559,488h1v1h-1zM569,488h1v1h-1zM578,488h1v1h-1zM588,488h1v1h-1zM598,488h1v1h-1zM608,488h1v1h-1zM617,488h1v1h-1zM627,488h1v1h-1zM637,488h1v1h-1zM646,488h1v1h-1zM656,488h1v1h-1zM666,488h1v1h-1zM676,488h1v1h-1zM685,488h1v1h-1zM695,488h1v1h-1zM209,511h1v1h-1zM219,511h1v1h-1zM228,511h1v1h-1zM238,511h1v1h-1zM248,511h1v1h-1zM258,511h1v1h-1zM267,511h1v1h-1zM277,511h1v1h-1zM287,511h1v1h-1zM296,511h1v1h-1zM306,511h1v1h-1zM316,511h1v1h-1zM326,511h1v1h-1zM335,511h1v1h-1zM345,511h1v1h-1zM355,511h1v1h-1zM365,511h1v1h-1zM374,511h1v1h-1zM384,511h1v1h-1zM394,511h1v1h-1zM403,511h1v1h-1zM413,511h1v1h-1zM423,511h1v1h-1zM433,511h1v1h-1zM442,511h1v1h-1zM452,511h1v1h-1zM462,511h1v1h-1zM471,511h1v1h-1zM481,511h1v1h-1zM491,511h1v1h-1zM501,511h1v1h-1zM510,511h1v1h-1zM520,511h1v1h-1zM530,511h1v1h-1zM539,511h1v1h-1zM549,511h1v1h-1zM559,511h1v1h-1zM569,511h1v1h-1zM578,511h1v1h-1zM588,511h1v1h-1zM598,511h1v1h-1zM608,511h1v1h-1zM617,511h1v1h-1zM627,511h1v1h-1zM637,511h1v1h-1zM646,511h1v1h-1zM656,511h1v1h-1zM666,511h1v1h-1zM676,511h1v1h-1zM685,511h1v1h-1zM695,511h1v1h-1z" fill="#b8b8b8"/>
<path d="M208.5,359.5 L210.5,358.5 L212.5,361.5 L214.5,361.5 L214.5,358.5 L218.5,358.5 L222.5,365.5 L228.5,365.5 L228.5,363.5 L240.5,363.5 L240.5,358.5 L249.5,358.5 L249.5,360.5 L255.5,360.5 L255.5,358.5 L258.5,358.5 L262.5,358.5 L262.5,363.5 L265.5,363.5 L265.5,358.5 L265.5,358.5 L269.5,358.5 L269.5,363.5 L272.5,363.5 L272.5,358.5 L272.5,358.5 L276.5,358.5 L276.5,363.5 L279.5,363.5 L279.5,358.5 L279.5,358.5 L283.5,358.5 L283.5,363.5 L286.5,363.5 L286.5,358.5 L286.5,358.5 L290.5,358.5 L290.5,363.5 L293.5,363.5 L293.5,358.5 L293.5,358.5 L298.5,358.5 L298.5,363.5 L301.5,363.5 L301.5,358.5 L301.5,358.5 L305.5,358.5 L305.5,363.5 L308.5,363.5 L308.5,358.5 L308.5,358.5 L312.5,358.5 L312.5,363.5 L315.5,363.5 L315.5,358.5 L312.5,358.5 L318.5,358.5 L319.5,360.5 L323.5,360.5 L323.5,358.5 L332.5,358.5 L336.5,365.5 L342.5,365.5 L342.5,363.5 L358.5,363.5 L358.5,358.5 L359.5,358.5 L359.5,361.5 L363.5,361.5 L363.5,358.5 L363.5,358.5 L363.5,361.5 L368.5,361.5 L368.5,358.5 L369.5,358.5 L369.5,361.5 L373.5,361.5 L373.5,359.5 L381.5,359.5 L381.5,360.5 L390.5,360.5 L390.5,361.5 L420.5,361.5 L421.5,363.5 L428.5,363.5 L428.5,361.5 L432.5,361.5 L432.5,358.5 L435.5,358.5 L435.5,361.5 L437.5,361.5 L437.5,358.5 L440.5,358.5 L440.5,361.5 L442.5,361.5 L442.5,358.5 L444.5,358.5 L444.5,363.5 L449.5,363.5 L450.5,365.5 L456.5,365.5 L457.5,363.5 L472.5,363.5 L472.5,358.5 L473.5,358.5 L473.5,361.5 L477.5,361.5 L477.5,358.5 L477.5,358.5 L477.5,361.5 L482.5,361.5 L482.5,358.5 L482.5,358.5 L482.5,361.5 L487.5,361.5 L487.5,359.5 L505.5,359.5 L505.5,360.5 L515.5,360.5 L516.5,362.5 L542.5,362.5 L542.5,361.5 L545.5,361.5 L545.5,358.5 L548.5,358.5 L548.5,361.5 L550.5,361.5 L550.5,358.5 L553.5,358.5 L553.5,361.5 L555.5,361.5 L555.5,358.5 L558.5,358.5 L558.5,363.5 L563.5,363.5 L564.5,365.5 L571.5,365.5 L571.5,363.5 L586.5,363.5 L586.5,358.5 L586.5,358.5 L586.5,361.5 L591.5,361.5 L591.5,358.5 L591.5,358.5 L591.5,361.5 L596.5,361.5 L596.5,358.5 L596.5,358.5 L596.5,361.5 L598.5,361.5 L598.5,359.5 L608.5,359.5 L608.5,360.5 L619.5,360.5 L619.5,361.5 L649.5,361.5 L650.5,363.5 L656.5,363.5 L656.5,361.5 L660.5,361.5 L660.5,358.5 L663.5,358.5 L663.5,361.5 L665.5,361.5 L665.5,358.5 L668.5,358.5 L668.5,361.5 L670.5,361.5 L670.5,358.5 L671.5,358.5 L672.5,363.5 L678.5,363.5 L678.5,365.5 L685.5,365.5 L686.5,363.5 L696.5,363.5" stroke="#33d633" stroke-width="1.0" fill="none" stroke-linejoin="miter"/>
<path d="M208.5,381.5 L381.5,381.5 L382.5,382.5 L399.5,382.5 L400.5,380.5 L420.5,380.5 L421.5,381.5 L494.5,381.5 L495.5,380.5 L515.5,380.5 L516.5,382.5 L534.5,382.5 L535.5,381.5 L609.5,381.5 L610.5,382.5 L628.5,382.5 L629.5,380.5 L648.5,380.5 L649.5,381.5 L696.5,381.5" stroke="#3cc6e6" stroke-width="1.0" fill="none" stroke-linejoin="miter"/>
<path d="M208.5,404.5 L381.5,404.5 L382.5,403.5 L391.5,403.5 L392.5,404.5 L399.5,404.5 L400.5,403.5 L411.5,403.5 L412.5,404.5 L419.5,404.5 L420.5,403.5 L429.5,403.5 L430.5,404.5 L495.5,404.5 L496.5,403.5 L504.5,403.5 L505.5,404.5 L513.5,404.5 L514.5,403.5 L524.5,403.5 L525.5,404.5 L533.5,404.5 L534.5,403.5 L542.5,403.5 L543.5,404.5 L609.5,404.5 L610.5,403.5 L619.5,403.5 L620.5,404.5 L627.5,404.5 L628.5,403.5 L639.5,403.5 L640.5,404.5 L647.5,404.5 L648.5,403.5 L657.5,403.5 L658.5,404.5 L696.5,404.5" stroke="#e0e050" stroke-width="1.0" fill="none" stroke-linejoin="miter"/>
<path d="M208.5,422.5 L221.5,422.5 L221.5,431.5 L229.5,431.5 L229.5,422.5 L335.5,422.5 L335.5,431.5 L343.5,431.5 L343.5,422.5 L449.5,422.5 L449.5,431.5 L458.5,431.5 L458.5,422.5 L564.5,422.5 L564.5,431.5 L572.5,431.5 L572.5,422.5 L678.5,422.5 L678.5,431.5 L686.5,431.5 L686.5,422.5 L696.5,422.5" stroke="#dd2a2a" stroke-width="1.0" fill="none" stroke-linejoin="miter"/>
<path d="M208.5,444.5 L218.5,444.5 L218.5,454.5 L240.5,454.5 L240.5,444.5 L332.5,444.5 L332.5,454.5 L354.5,454.5 L354.5,444.5 L447.5,444.5 L447.5,454.5 L469.5,454.5 L469.5,444.5 L561.5,444.5 L561.5,454.5 L583.5,454.5 L583.5,444.5 L675.5,444.5 L675.5,454.5 L696.5,454.5" stroke="#f09070" stroke-width="1.0" fill="none" stroke-linejoin="miter"/>
<path d="M208.5,467.5 L231.5,467.5 L231.5,477.5 L235.5,477.5 L235.5,467.5 L345.5,467.5 L345.5,477.5 L349.5,477.5 L349.5,467.5 L460.5,467.5 L460.5,477.5 L463.5,477.5 L463.5,467.5 L574.5,467.5 L574.5,477.5 L578.5,477.5 L578.5,467.5 L688.5,467.5 L688.5,477.5 L692.5,477.5 L692.5,467.5 L696.5,467.5" stroke="#7474e8" stroke-width="1.0" fill="none" stroke-linejoin="miter"/>
<path d="M208.5,490.5 L228.5,490.5 L228.5,499.5 L342.5,499.5 L342.5,490.5 L456.5,490.5 L456.5,499.5 L570.5,499.5 L570.5,490.5 L684.5,490.5 L684.5,499.5 L696.5,499.5" stroke="#cccccc" stroke-width="1.0" fill="none" stroke-linejoin="miter"/>
<path d="M208.5,521.5 L209.5,521.5 L209.5,512.5 L249.5,512.5 L249.5,521.5 L254.5,521.5 L254.5,512.5 L259.5,512.5 L259.5,521.5 L261.5,521.5 L261.5,512.5 L264.5,512.5 L264.5,521.5 L268.5,521.5 L268.5,512.5 L272.5,512.5 L272.5,521.5 L275.5,521.5 L275.5,512.5 L279.5,512.5 L279.5,521.5 L283.5,521.5 L283.5,512.5 L286.5,512.5 L286.5,521.5 L290.5,521.5 L290.5,512.5 L294.5,512.5 L294.5,521.5 L297.5,521.5 L297.5,512.5 L301.5,512.5 L301.5,521.5 L304.5,521.5 L304.5,512.5 L308.5,512.5 L308.5,521.5 L311.5,521.5 L311.5,512.5 L319.5,512.5 L319.5,521.5 L323.5,521.5 L323.5,512.5 L334.5,512.5 L334.5,521.5 L358.5,521.5 L358.5,512.5 L363.5,512.5 L363.5,521.5 L368.5,521.5 L368.5,512.5 L374.5,512.5 L374.5,521.5 L428.5,521.5 L428.5,512.5 L433.5,512.5 L433.5,521.5 L437.5,521.5 L437.5,512.5 L444.5,512.5 L444.5,521.5 L472.5,521.5 L472.5,512.5 L477.5,512.5 L477.5,521.5 L481.5,521.5 L481.5,512.5 L488.5,512.5 L488.5,521.5 L542.5,521.5 L542.5,512.5 L547.5,512.5 L547.5,521.5 L550.5,521.5 L550.5,512.5 L557.5,512.5 L557.5,521.5 L586.5,521.5 L586.5,512.5 L591.5,512.5 L591.5,521.5 L596.5,521.5 L596.5,512.5 L601.5,512.5 L601.5,521.5 L656.5,521.5 L656.5,512.5 L662.5,512.5 L662.5,521.5 L665.5,521.5 L665.5,512.5 L672.5,512.5 L672.5,521.5 L696.5,521.5" stroke="#e888b0" stroke-width="1.0" fill="none" stroke-linejoin="miter"/>
<rect x="208" y="533.5" width="488" height="15" fill="#e6e6e6" />
<rect x="208" y="534" width="15" height="14" fill="#f6f6f6" />
<rect x="208" y="534" width="15" height="1" fill="#ffffff"/>
<rect x="223" y="534" width="1" height="14" fill="#a0a0a0"/>
<polygon points="213,541 218,538 218,544" fill="#000"/>
<polygon points="310,542 315.5,536.4 321,542" fill="#000"/>
<rect x="679.5" y="534" width="15" height="14" fill="#f6f6f6" />
<rect x="679" y="534" width="1" height="14" fill="#a0a0a0"/>
<polygon points="685,538.3 691,541.3 685,544.4" fill="#000"/>
<rect x="216" y="321" width="24" height="23.6" fill="#000" />
<path d="M227.4,323 V343" stroke="#fff" stroke-width="1.2"/>
<path d="M218.3,333 L227.4,324.7 L237.7,329" stroke="#22e022" stroke-width="1.8" fill="none"/>
<text x="221.3" y="341.7" font-size="8.5" fill="#f0f0f0" text-anchor="middle" >0</text>
<rect x="245" y="318" width="1" height="30" fill="#8c8c8c"/>
<rect x="253.5" y="322.5" width="7.3" height="4.2" fill="#10d010" stroke="#303030" stroke-width="0.6"/>
<rect x="261" y="324.5" width="16" height="0.8" fill="#707070"/>
<rect x="253.5" y="331.5" width="7.3" height="4.2" fill="#20e0f0" stroke="#303030" stroke-width="0.6"/>
<rect x="261" y="333.5" width="16" height="0.8" fill="#707070"/>
<rect x="253.5" y="340.5" width="7.3" height="4.2" fill="#1e70c8" stroke="#303030" stroke-width="0.6"/>
<rect x="261" y="342.5" width="16" height="0.8" fill="#707070"/>
<path d="M271.6,325 V341.5 M269.8,327 L271.6,324.8 L273.4,327 M269.8,331.5 L271.6,333.5 L273.4,331.5 M269.8,335.5 L271.6,333.5 L273.4,335.5 M269.8,339.5 L271.6,341.8 L273.4,339.5" stroke="#000" stroke-width="1.1" fill="none"/>
<rect x="282" y="318" width="1" height="30" fill="#8c8c8c"/>
<rect x="290.5" y="322.5" width="23" height="22" fill="#fff" stroke="#6a6a6a" stroke-width="1"/>
<rect x="291" y="323" width="22" height="3.5" fill="#b8b8b8" />
<rect x="293" y="329" width="6" height="1.2" fill="#000" />
<rect x="302" y="329" width="3.5" height="1.2" fill="#000" />
<rect x="307.5" y="329" width="3.5" height="1.2" fill="#000" />
<rect x="293" y="332" width="6" height="1.2" fill="#000" />
<rect x="302" y="332" width="3.5" height="1.2" fill="#000" />
<rect x="307.5" y="332" width="3.5" height="1.2" fill="#000" />
<rect x="293" y="335" width="6" height="1.2" fill="#000" />
<rect x="302" y="335" width="3.5" height="1.2" fill="#000" />
<rect x="307.5" y="335" width="3.5" height="1.2" fill="#000" />
<rect x="291" y="338" width="22" height="1" fill="#6a6a6a"/>
<rect x="293" y="341" width="3.2" height="1.2" fill="#000" />
<rect x="298" y="341" width="3.2" height="1.2" fill="#000" />
<rect x="303" y="341" width="3.2" height="1.2" fill="#000" />
<rect x="308" y="341" width="3.2" height="1.2" fill="#000" />
<rect x="321" y="321" width="23.6" height="23.6" fill="#000" />
<rect x="326" y="323" width="1.1" height="20" fill="#f0f0f0"/>
<rect x="339" y="323" width="1.1" height="20" fill="#f0f0f0"/>
<path d="M321.5,333.5 L332.8,324 L344.3,330" stroke="#22e022" stroke-width="1.8" fill="none"/>
<rect x="352" y="321" width="23.9" height="23.6" fill="#000" />
<rect x="354" y="325.8" width="20" height="1.1" fill="#f0f0f0"/>
<rect x="354" y="339" width="20" height="1.1" fill="#f0f0f0"/>
<path d="M353,333 L364,324 L375.5,330" stroke="#22e022" stroke-width="1.8" fill="none"/>
<rect x="383.2" y="321" width="23.7" height="23.6" fill="#b4b4b4" />
<rect x="388" y="322" width="1.1" height="22" fill="#f8f8f8"/>
<rect x="401" y="322" width="1.1" height="22" fill="#f8f8f8"/>
<rect x="384" y="326" width="22" height="1.1" fill="#f8f8f8"/>
<rect x="384" y="339" width="22" height="1.1" fill="#f8f8f8"/>
<circle cx="395" cy="332.8" r="4" fill="none" stroke="#cfcfcf" stroke-width="1.5"/>
<rect x="412" y="318" width="1" height="30" fill="#8c8c8c"/>
<path d="M429,320.8 A8.5,8.5 0 0 0 429,337.8 Z" fill="#e4f2fa"/>
<path d="M429,320.8 A8.5,8.5 0 0 0 429,337.8" fill="none" stroke="#303030" stroke-width="1.3"/>
<path d="M425,329.3 H429 M428.6,326 V332.5" stroke="#303030" stroke-width="1.1"/>
<rect x="461.5" y="321.5" width="22.5" height="13" rx="2" fill="#fff878" stroke="#000" stroke-width="1.2"/>
<text x="463.5" y="327.8" font-size="5.2" fill="#707020" text-anchor="start" textLength="18" lengthAdjust="spacingAndGlyphs" >Comment</text>
<text x="463.5" y="333.2" font-size="5.2" fill="#707020" text-anchor="start" >Text</text>
<path d="M473.5,335 L482,343" stroke="#000" stroke-width="1.4"/>
<polygon points="485,345.5 485,339 478.5,345.5" fill="#000"/>
<path d="M493,323 L515,343 M515,323 L493,343" stroke="#c8c8c8" stroke-width="3" fill="none"/>
<path d="M494,327 Q504,330 514,327 L514,339 Q504,336 494,339 Z" fill="none" stroke="#d0d0d0" stroke-width="1.2"/>
<rect x="521" y="318" width="1" height="30" fill="#8c8c8c"/>
<rect x="529" y="321" width="24" height="23.6" fill="#000" />
<rect x="531" y="324.3" width="3" height="3" fill="#20e020" />
<rect x="531" y="330.5" width="3" height="3" fill="#30e0f0" />
<text x="535.5" y="328.3" font-size="7.5" fill="#d8d0d0" text-anchor="start" textLength="13" lengthAdjust="spacingAndGlyphs" >Ch1</text>
<text x="535.5" y="334.5" font-size="7.5" fill="#d8d0d0" text-anchor="start" textLength="13" lengthAdjust="spacingAndGlyphs" >Ch2</text>
<rect x="560" y="321" width="23.8" height="23.6" fill="#000" />
<path d="M561.5,333.5 C564,328 566,322 568,324.5 C571,328 572,333 576,334 C579,334.5 581,333 582.5,331.5" stroke="#22e022" stroke-width="1.6" fill="none"/>
<path d="M561.5,335.5 C564,341 567,342.5 569.5,341 C572,339 574,335 576.5,334.5 C579,334 581,336 582.5,338" stroke="#30e0e8" stroke-width="1.6" fill="none"/>
<rect x="591.8" y="321.8" width="22.5" height="22" fill="#fff" stroke="#c4c4c4" stroke-width="1"/>
<rect x="592.3" y="322.3" width="21.5" height="3" fill="#e4e4e4" />
<rect x="593" y="334" width="11" height="8.7" fill="#b0b0b0" />
<path d="M594.5,339 Q597,334 598.5,338 T602.5,337" stroke="#d8d8d8" stroke-width="1" fill="none"/>
<path d="M605,332.5 L611,327 M608,327 H611 V330" stroke="#c4c4c4" stroke-width="1.4" fill="none"/>
<polygon points="622,321.2 625.8,321.2 631.5,327.2 626.3,332.2 622.2,328" fill="#f29a10" stroke="#2a1a08" stroke-width="0.9"/>
<polygon points="626.3,332.2 631.5,327.2 636.2,332.2 631.2,337.2" fill="#b8ccd4" stroke="#101010" stroke-width="1"/>
<polygon points="631.2,337.2 636.2,332.2 639,335.8 634.5,339.8" fill="#a8381a" stroke="#401008" stroke-width="0.8"/>
<path d="M637,337 Q646,335 644,341 Q641,344 634,341" fill="none" stroke="#9090a0" stroke-width="0.6" stroke-dasharray="1.2,0.8"/>
<path d="M655.5,323.5 L674.5,342 M674.5,323.5 L655.5,342" stroke="#a8a8a8" stroke-width="5" fill="none"/>
<path d="M655.5,323.5 L674.5,342 M674.5,323.5 L655.5,342" stroke="#d8d8d8" stroke-width="3.4" fill="none"/>
<text x="685.3" y="338.6" font-size="16.5" fill="#000" text-anchor="middle" style="font-family:&quot;Liberation Serif&quot;, serif;font-weight:bold">1</text>
<rect x="0" y="0" width="886" height="1" fill="#2c6a9e" />
<rect x="0" y="0" width="1" height="593" fill="#2c6a9e" />
<rect x="885" y="0" width="1" height="593" fill="#2c6a9e" />
<rect x="0" y="592" width="886" height="1" fill="#1f70bc" />
</svg>
</body></html>
